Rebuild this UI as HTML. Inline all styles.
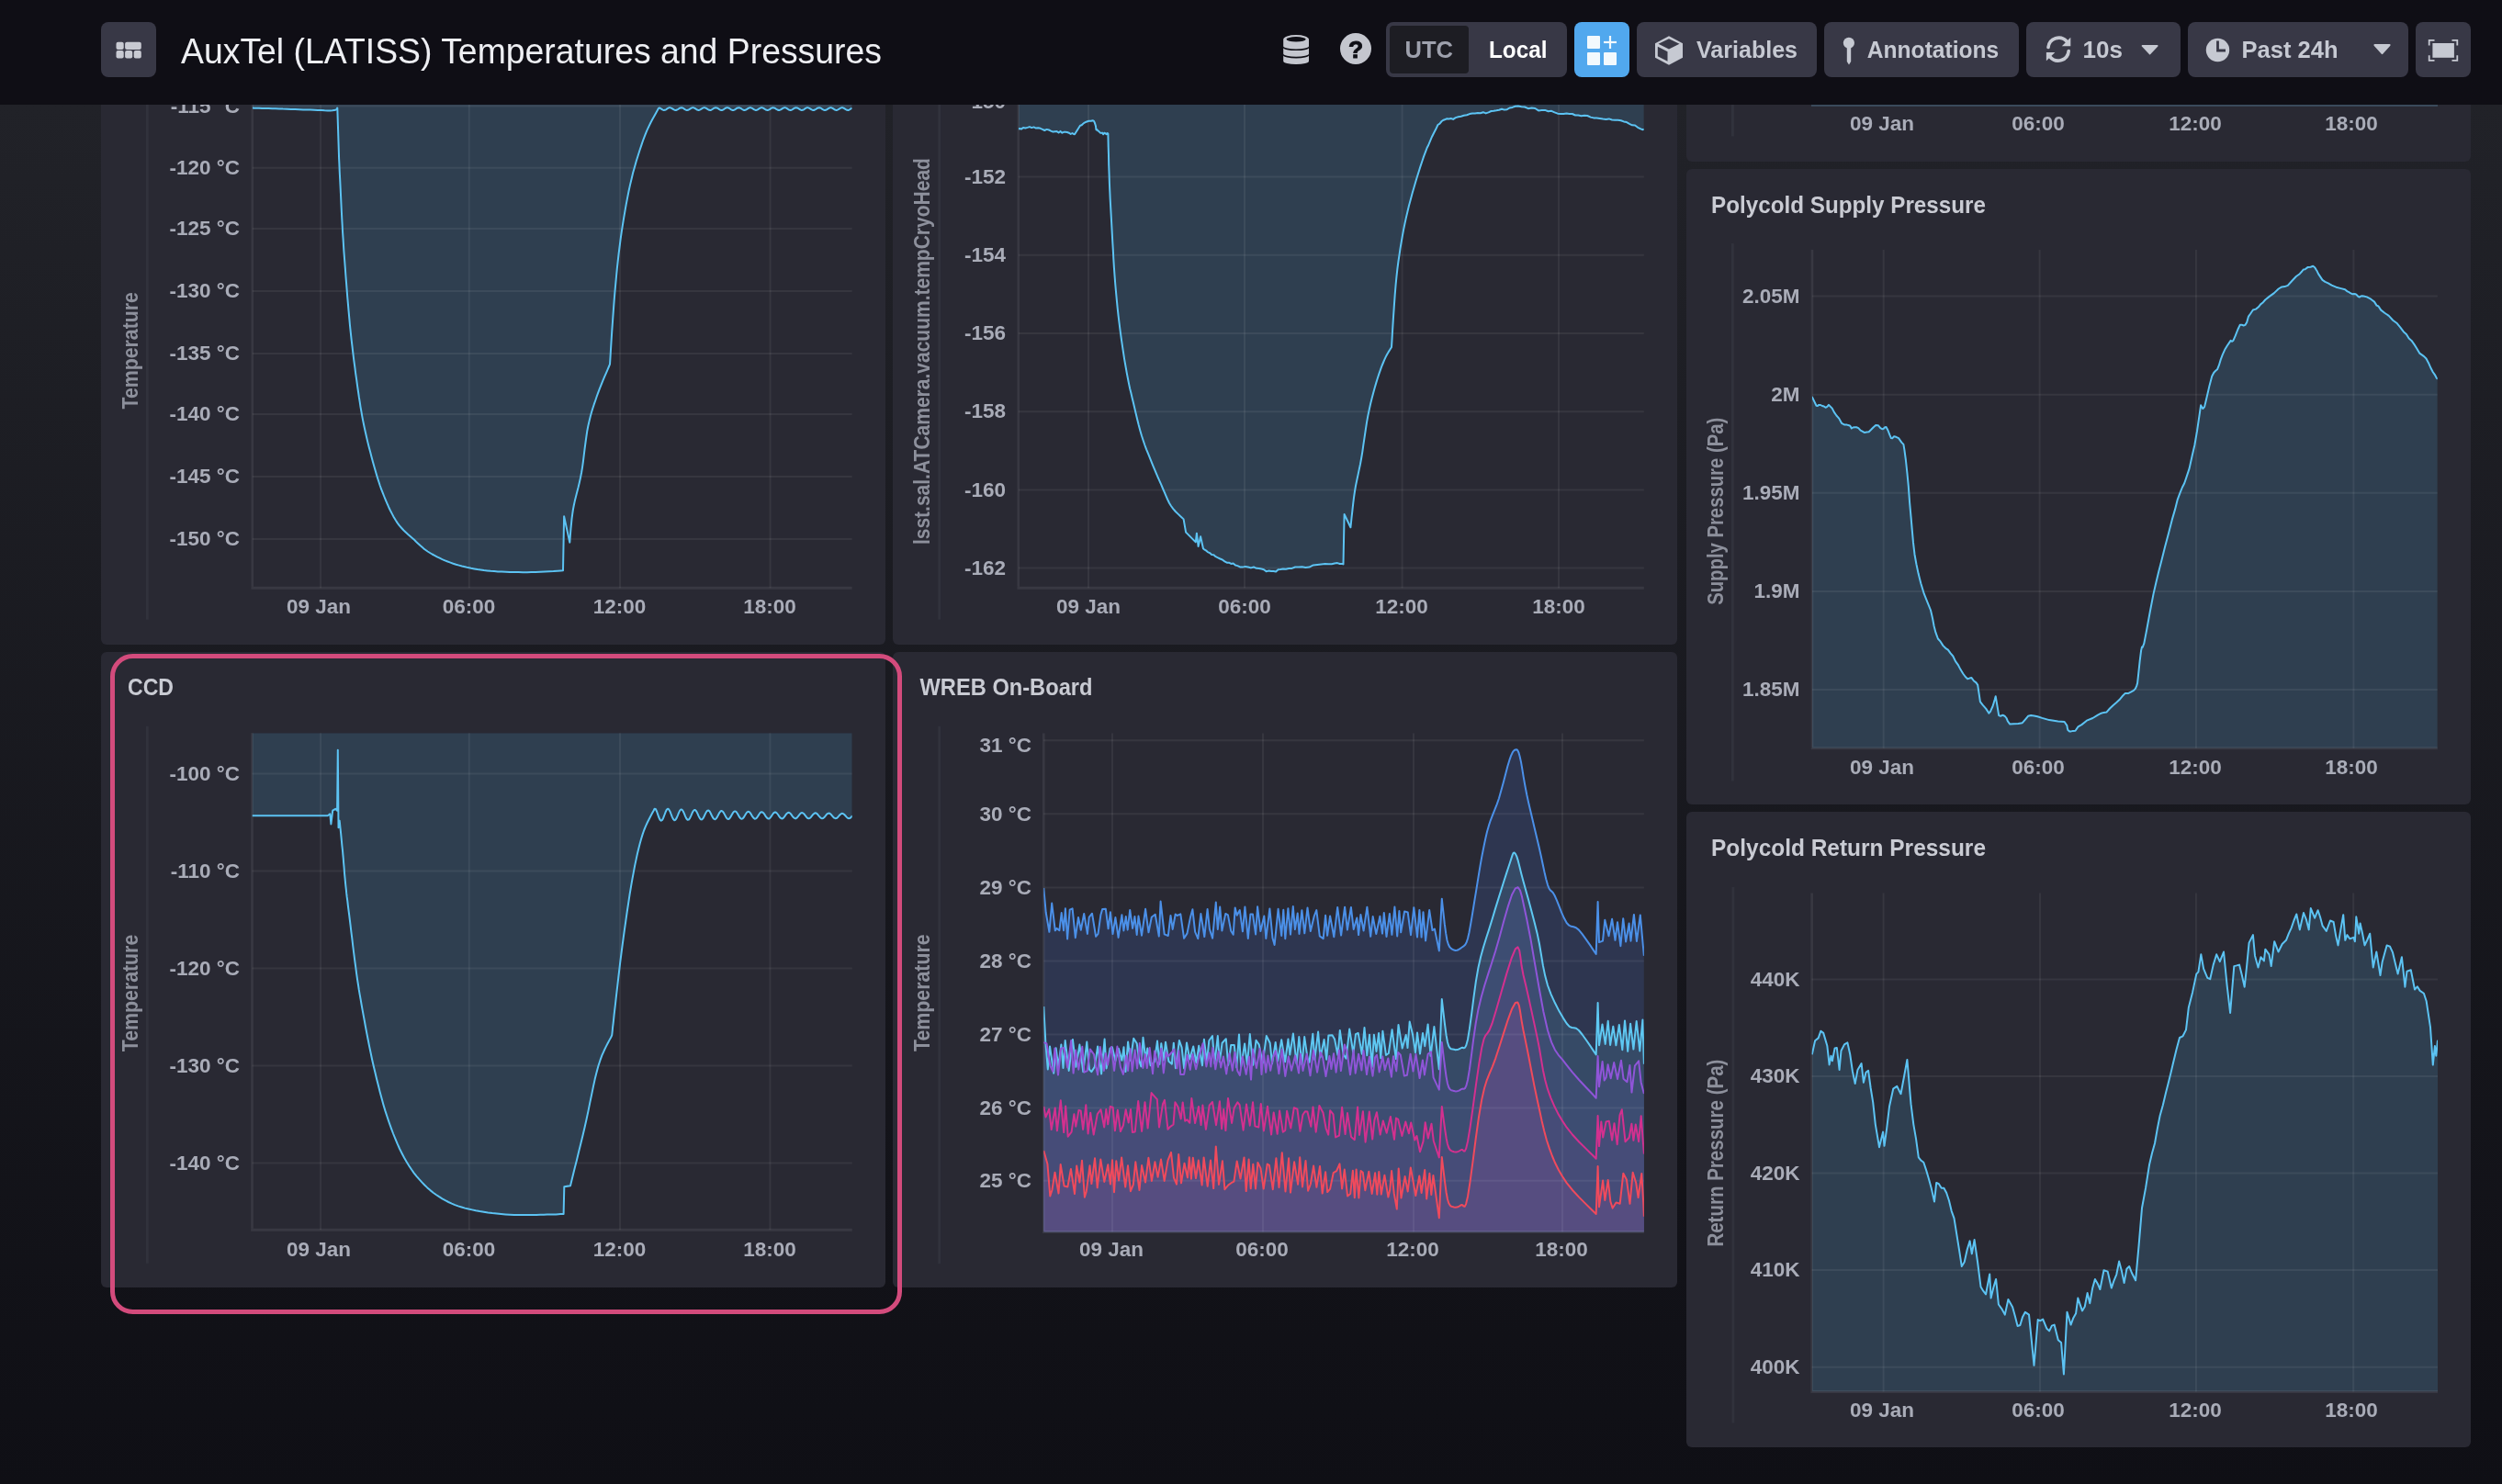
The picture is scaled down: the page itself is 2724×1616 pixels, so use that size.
<!DOCTYPE html>
<html><head><meta charset="utf-8"><title>AuxTel (LATISS) Temperatures and Pressures</title>
<style>
html,body{margin:0;padding:0;}
body{width:2724px;height:1616px;overflow:hidden;position:relative;background:#0f0f15;font-family:"Liberation Sans", sans-serif;}
#bg{position:absolute;left:0;top:0;width:2724px;height:1616px;background:linear-gradient(to bottom,#212228 114px,#0f0f15 1616px);}
.panel{position:absolute;background:#292933;border-radius:6px;overflow:hidden;}
.panel svg{position:absolute;left:0;top:0;display:block;will-change:transform;}
#hdr{position:absolute;left:0;top:0;width:2724px;height:114px;background:#0f0e15;z-index:5;}
#hdr svg{will-change:transform;}
.btn{position:absolute;top:24px;height:60px;background:#383846;border-radius:8px;}
text{font-family:"Liberation Sans", sans-serif;}
.tk{font-size:22.5px;font-weight:700;fill:#a9acb8;}
.al{font-size:23px;font-weight:700;fill:#8d909c;}
.ti{font-size:26.5px;font-weight:700;fill:#c9cbd3;}
.ht{font-size:39px;font-weight:400;fill:#eeeff3;}
.bt{font-size:26px;font-weight:700;fill:#c6c9d2;}
#hl{position:absolute;left:119.5px;top:712px;width:852.4px;height:709.3px;border:5px solid #d34b7c;border-radius:24.5px;z-index:3;}
</style></head>
<body>
<div id="bg"></div>
<div class="panel" style="left:110px;top:10px;width:854px;height:692px"><svg width="854" height="692" viewBox="110 10 854 692"><clipPath id="cp1"><rect x="274.8" y="98" width="652.8" height="542.3"/></clipPath><polygon points="274.8,98 274.8,117.6 276.7,117.7 279.1,117.7 282,117.8 285.3,117.9 288.8,118 292.5,118.1 296.3,118.2 300,118.3 303.9,118.4 308,118.6 312.4,118.7 316.8,118.9 321.3,119.1 325.7,119.2 330,119.4 334,119.5 337.9,119.6 342,119.8 345.9,120 349.8,120.1 353.4,120.3 356.7,120.4 359.6,120.4 362,120.3 363.8,120.1 365,119.8 365.9,119.4 366.4,118.9 366.7,118.5 366.9,118.1 367,117.7 367.3,117.5 369.1,172.8 369.4,178.5 369.7,186.3 370.2,195.6 370.7,205.8 371.2,216.4 371.7,227 372.2,236.9 372.7,245.6 373.1,253.2 373.6,260.4 374,267.1 374.4,273.6 374.9,280 375.4,286.5 375.9,293.2 376.4,300.2 377,307.6 377.6,315.2 378.2,323 378.9,330.9 379.6,338.8 380.3,346.7 381,354.5 381.8,362.1 382.6,369.7 383.5,377.2 384.4,384.8 385.3,392.3 386.3,399.7 387.2,406.9 388.2,413.7 389.1,420.3 390,426.5 390.8,432.2 391.7,437.7 392.5,443.1 393.4,448.2 394.3,453.4 395.3,458.6 396.4,464 397.6,469.5 398.9,475.2 400.2,480.9 401.6,486.5 403.1,492.1 404.5,497.5 405.9,502.8 407.3,507.7 408.6,512.3 409.9,516.8 411.2,521 412.5,525 413.8,529 415.2,532.8 416.7,536.7 418.2,540.5 419.8,544.4 421.5,548.3 423.2,552.2 425,556 426.9,559.6 428.8,563.2 430.8,566.5 432.8,569.6 434.9,572.4 437.2,575 439.5,577.5 441.9,579.7 444.3,581.9 446.6,583.9 448.9,585.9 451,587.8 452.9,589.7 454.7,591.4 456.4,593 458.1,594.6 459.8,596.1 461.5,597.6 463.5,599 465.6,600.5 468,602 470.5,603.5 473.1,604.9 475.8,606.3 478.6,607.7 481.5,609.1 484.4,610.3 487.4,611.5 490.4,612.6 493.4,613.7 496.5,614.7 499.7,615.6 502.9,616.5 506.2,617.3 509.5,618.1 512.9,618.8 516.3,619.4 519.8,620 523.2,620.5 526.8,621 530.4,621.4 534.1,621.8 538,622.1 542,622.4 546.2,622.6 550.6,622.8 555.2,623 559.9,623.1 564.6,623.1 569.3,623.2 573.9,623.2 578.4,623.1 583,623 588,622.8 593,622.5 598,622.2 602.6,622 606.8,621.7 610.3,621.5 613,621.3 614.1,562.3 620.3,590.7 620.5,588 620.8,584.4 621.1,580.1 621.5,575.4 622,570.3 622.5,565.1 623.2,559.9 623.9,555 624.8,550.3 625.8,545.6 627,540.8 628.2,536 629.5,531 630.7,525.9 631.9,520.6 633,515 634,509.1 634.9,502.7 635.7,496 636.5,489.3 637.4,482.5 638.3,476 639.2,469.8 640.3,464 641.5,458.7 642.7,453.7 644,449 645.4,444.5 646.8,440.2 648.3,436 649.7,431.8 651.2,427.6 652.8,423.3 654.6,418.8 656.4,414.3 658.3,409.9 660.1,405.8 661.7,402.1 663,399 664,396.7 664.4,390.6 664.9,382.3 665.5,372.5 666.2,361.6 667,350.3 667.8,338.9 668.6,328.1 669.4,318.4 670.2,309.6 671,301 671.8,292.6 672.7,284.4 673.6,276.4 674.6,268.5 675.6,260.7 676.7,252.9 677.9,245.2 679.1,237.6 680.4,230.1 681.7,222.7 683.1,215.4 684.5,208.3 686,201.4 687.6,194.7 689.2,188.1 691,181.7 692.8,175.3 694.7,169.2 696.6,163.3 698.5,157.6 700.3,152.3 702.2,147.3 704.1,142.6 706.2,138.1 708.3,133.8 710.4,129.8 712.4,126.2 714.2,123 715.7,120.3 716.8,118.2 718,117.4 719.2,118.1 720.4,118.9 721.6,119.6 722.8,120 724,119.8 725.2,119.3 726.4,118.4 727.6,117.7 728.8,117.2 730,117.3 731.2,117.8 732.4,118.6 733.6,119.4 734.8,119.9 736,120 737.2,119.5 738.4,118.8 739.6,118 740.8,117.4 742,117.2 743.2,117.5 744.4,118.2 745.6,119.1 746.8,119.7 748,120 749.2,119.8 750.4,119.1 751.6,118.3 752.8,117.6 754,117.2 755.2,117.3 756.4,117.9 757.6,118.7 758.8,119.5 760,119.9 761.2,119.9 762.4,119.4 763.6,118.7 764.8,117.8 766,117.3 767.2,117.2 768.4,117.6 769.6,118.4 770.8,119.2 772,119.8 773.2,120 774.4,119.7 775.6,119 776.8,118.2 778,117.5 779.2,117.2 780.4,117.4 781.6,118 782.8,118.9 784,119.6 785.2,120 786.4,119.9 787.6,119.3 788.8,118.5 790,117.7 791.2,117.3 792.4,117.3 793.6,117.7 794.8,118.5 796,119.3 797.2,119.9 798.4,120 799.6,119.6 800.8,118.9 802,118 803.2,117.4 804.4,117.2 805.6,117.5 806.8,118.2 808,119 809.2,119.7 810.4,120 811.6,119.8 812.8,119.2 814,118.4 815.2,117.6 816.4,117.2 817.6,117.3 818.8,117.8 820,118.7 821.2,119.4 822.4,119.9 823.6,119.9 824.8,119.5 826,118.7 827.2,117.9 828.4,117.3 829.6,117.2 830.8,117.6 832,118.3 833.2,119.1 834.4,119.8 835.6,120 836.8,119.7 838,119.1 839.2,118.2 840.4,117.5 841.6,117.2 842.8,117.4 844,118 845.2,118.8 846.4,119.5 847.6,120 848.8,119.9 850,119.4 851.2,118.6 852.4,117.8 853.6,117.3 854.8,117.2 856,117.7 857.2,118.4 858.4,119.3 859.6,119.8 860.8,120 862,119.6 863.2,118.9 864.4,118.1 865.6,117.4 866.8,117.2 868,117.4 869.2,118.1 870.4,118.9 871.6,119.6 872.8,120 874,119.8 875.2,119.3 876.4,118.4 877.6,117.7 878.8,117.2 880,117.3 881.2,117.8 882.4,118.6 883.6,119.4 884.8,119.9 886,120 887.2,119.5 888.4,118.8 889.6,118 890.8,117.4 892,117.2 893.2,117.5 894.4,118.2 895.6,119.1 896.8,119.7 898,120 899.2,119.8 900.4,119.1 901.6,118.3 902.8,117.6 904,117.2 905.2,117.3 906.4,117.9 907.6,118.7 908.8,119.5 910,119.9 911.2,119.9 912.4,119.4 913.6,118.7 914.8,117.8 916,117.3 917.2,117.2 918.4,117.6 919.6,118.4 920.8,119.2 922,119.8 923.2,120 924.4,119.7 925.6,119 926.8,118.2 927.6,117.5 927.6,98" fill="#2f3f50" clip-path="url(#cp1)"/><line x1="274.8" x2="927.6" y1="115.5" y2="115.5" stroke="rgba(255,255,255,0.062)" stroke-width="2"/><line x1="274.8" x2="927.6" y1="182.8" y2="182.8" stroke="rgba(255,255,255,0.062)" stroke-width="2"/><line x1="274.8" x2="927.6" y1="248.9" y2="248.9" stroke="rgba(255,255,255,0.062)" stroke-width="2"/><line x1="274.8" x2="927.6" y1="316.9" y2="316.9" stroke="rgba(255,255,255,0.062)" stroke-width="2"/><line x1="274.8" x2="927.6" y1="384.9" y2="384.9" stroke="rgba(255,255,255,0.062)" stroke-width="2"/><line x1="274.8" x2="927.6" y1="450.9" y2="450.9" stroke="rgba(255,255,255,0.062)" stroke-width="2"/><line x1="274.8" x2="927.6" y1="518.9" y2="518.9" stroke="rgba(255,255,255,0.062)" stroke-width="2"/><line x1="274.8" x2="927.6" y1="586.9" y2="586.9" stroke="rgba(255,255,255,0.062)" stroke-width="2"/><line x1="349.1" x2="349.1" y1="98" y2="640.3" stroke="rgba(255,255,255,0.062)" stroke-width="2"/><line x1="510.8" x2="510.8" y1="98" y2="640.3" stroke="rgba(255,255,255,0.062)" stroke-width="2"/><line x1="675" x2="675" y1="98" y2="640.3" stroke="rgba(255,255,255,0.062)" stroke-width="2"/><line x1="838.6" x2="838.6" y1="98" y2="640.3" stroke="rgba(255,255,255,0.062)" stroke-width="2"/><line x1="160.4" x2="160.4" y1="90" y2="674.8" stroke="#31323c" stroke-width="2.8"/><line x1="274.8" x2="274.8" y1="98" y2="638.8" stroke="rgba(255,255,255,0.075)" stroke-width="2.6"/><line x1="273.5" x2="927.6" y1="640.3" y2="640.3" stroke="rgba(255,255,255,0.075)" stroke-width="3"/><polyline points="274.8,117.6 276.7,117.7 279.1,117.7 282,117.8 285.3,117.9 288.8,118 292.5,118.1 296.3,118.2 300,118.3 303.9,118.4 308,118.6 312.4,118.7 316.8,118.9 321.3,119.1 325.7,119.2 330,119.4 334,119.5 337.9,119.6 342,119.8 345.9,120 349.8,120.1 353.4,120.3 356.7,120.4 359.6,120.4 362,120.3 363.8,120.1 365,119.8 365.9,119.4 366.4,118.9 366.7,118.5 366.9,118.1 367,117.7 367.3,117.5 369.1,172.8 369.4,178.5 369.7,186.3 370.2,195.6 370.7,205.8 371.2,216.4 371.7,227 372.2,236.9 372.7,245.6 373.1,253.2 373.6,260.4 374,267.1 374.4,273.6 374.9,280 375.4,286.5 375.9,293.2 376.4,300.2 377,307.6 377.6,315.2 378.2,323 378.9,330.9 379.6,338.8 380.3,346.7 381,354.5 381.8,362.1 382.6,369.7 383.5,377.2 384.4,384.8 385.3,392.3 386.3,399.7 387.2,406.9 388.2,413.7 389.1,420.3 390,426.5 390.8,432.2 391.7,437.7 392.5,443.1 393.4,448.2 394.3,453.4 395.3,458.6 396.4,464 397.6,469.5 398.9,475.2 400.2,480.9 401.6,486.5 403.1,492.1 404.5,497.5 405.9,502.8 407.3,507.7 408.6,512.3 409.9,516.8 411.2,521 412.5,525 413.8,529 415.2,532.8 416.7,536.7 418.2,540.5 419.8,544.4 421.5,548.3 423.2,552.2 425,556 426.9,559.6 428.8,563.2 430.8,566.5 432.8,569.6 434.9,572.4 437.2,575 439.5,577.5 441.9,579.7 444.3,581.9 446.6,583.9 448.9,585.9 451,587.8 452.9,589.7 454.7,591.4 456.4,593 458.1,594.6 459.8,596.1 461.5,597.6 463.5,599 465.6,600.5 468,602 470.5,603.5 473.1,604.9 475.8,606.3 478.6,607.7 481.5,609.1 484.4,610.3 487.4,611.5 490.4,612.6 493.4,613.7 496.5,614.7 499.7,615.6 502.9,616.5 506.2,617.3 509.5,618.1 512.9,618.8 516.3,619.4 519.8,620 523.2,620.5 526.8,621 530.4,621.4 534.1,621.8 538,622.1 542,622.4 546.2,622.6 550.6,622.8 555.2,623 559.9,623.1 564.6,623.1 569.3,623.2 573.9,623.2 578.4,623.1 583,623 588,622.8 593,622.5 598,622.2 602.6,622 606.8,621.7 610.3,621.5 613,621.3 614.1,562.3 620.3,590.7 620.5,588 620.8,584.4 621.1,580.1 621.5,575.4 622,570.3 622.5,565.1 623.2,559.9 623.9,555 624.8,550.3 625.8,545.6 627,540.8 628.2,536 629.5,531 630.7,525.9 631.9,520.6 633,515 634,509.1 634.9,502.7 635.7,496 636.5,489.3 637.4,482.5 638.3,476 639.2,469.8 640.3,464 641.5,458.7 642.7,453.7 644,449 645.4,444.5 646.8,440.2 648.3,436 649.7,431.8 651.2,427.6 652.8,423.3 654.6,418.8 656.4,414.3 658.3,409.9 660.1,405.8 661.7,402.1 663,399 664,396.7 664.4,390.6 664.9,382.3 665.5,372.5 666.2,361.6 667,350.3 667.8,338.9 668.6,328.1 669.4,318.4 670.2,309.6 671,301 671.8,292.6 672.7,284.4 673.6,276.4 674.6,268.5 675.6,260.7 676.7,252.9 677.9,245.2 679.1,237.6 680.4,230.1 681.7,222.7 683.1,215.4 684.5,208.3 686,201.4 687.6,194.7 689.2,188.1 691,181.7 692.8,175.3 694.7,169.2 696.6,163.3 698.5,157.6 700.3,152.3 702.2,147.3 704.1,142.6 706.2,138.1 708.3,133.8 710.4,129.8 712.4,126.2 714.2,123 715.7,120.3 716.8,118.2 718,117.4 719.2,118.1 720.4,118.9 721.6,119.6 722.8,120 724,119.8 725.2,119.3 726.4,118.4 727.6,117.7 728.8,117.2 730,117.3 731.2,117.8 732.4,118.6 733.6,119.4 734.8,119.9 736,120 737.2,119.5 738.4,118.8 739.6,118 740.8,117.4 742,117.2 743.2,117.5 744.4,118.2 745.6,119.1 746.8,119.7 748,120 749.2,119.8 750.4,119.1 751.6,118.3 752.8,117.6 754,117.2 755.2,117.3 756.4,117.9 757.6,118.7 758.8,119.5 760,119.9 761.2,119.9 762.4,119.4 763.6,118.7 764.8,117.8 766,117.3 767.2,117.2 768.4,117.6 769.6,118.4 770.8,119.2 772,119.8 773.2,120 774.4,119.7 775.6,119 776.8,118.2 778,117.5 779.2,117.2 780.4,117.4 781.6,118 782.8,118.9 784,119.6 785.2,120 786.4,119.9 787.6,119.3 788.8,118.5 790,117.7 791.2,117.3 792.4,117.3 793.6,117.7 794.8,118.5 796,119.3 797.2,119.9 798.4,120 799.6,119.6 800.8,118.9 802,118 803.2,117.4 804.4,117.2 805.6,117.5 806.8,118.2 808,119 809.2,119.7 810.4,120 811.6,119.8 812.8,119.2 814,118.4 815.2,117.6 816.4,117.2 817.6,117.3 818.8,117.8 820,118.7 821.2,119.4 822.4,119.9 823.6,119.9 824.8,119.5 826,118.7 827.2,117.9 828.4,117.3 829.6,117.2 830.8,117.6 832,118.3 833.2,119.1 834.4,119.8 835.6,120 836.8,119.7 838,119.1 839.2,118.2 840.4,117.5 841.6,117.2 842.8,117.4 844,118 845.2,118.8 846.4,119.5 847.6,120 848.8,119.9 850,119.4 851.2,118.6 852.4,117.8 853.6,117.3 854.8,117.2 856,117.7 857.2,118.4 858.4,119.3 859.6,119.8 860.8,120 862,119.6 863.2,118.9 864.4,118.1 865.6,117.4 866.8,117.2 868,117.4 869.2,118.1 870.4,118.9 871.6,119.6 872.8,120 874,119.8 875.2,119.3 876.4,118.4 877.6,117.7 878.8,117.2 880,117.3 881.2,117.8 882.4,118.6 883.6,119.4 884.8,119.9 886,120 887.2,119.5 888.4,118.8 889.6,118 890.8,117.4 892,117.2 893.2,117.5 894.4,118.2 895.6,119.1 896.8,119.7 898,120 899.2,119.8 900.4,119.1 901.6,118.3 902.8,117.6 904,117.2 905.2,117.3 906.4,117.9 907.6,118.7 908.8,119.5 910,119.9 911.2,119.9 912.4,119.4 913.6,118.7 914.8,117.8 916,117.3 917.2,117.2 918.4,117.6 919.6,118.4 920.8,119.2 922,119.8 923.2,120 924.4,119.7 925.6,119 926.8,118.2 927.6,117.5" fill="none" stroke="#5cc3f3" stroke-width="2.0" stroke-linejoin="round" clip-path="url(#cp1)"/><text x="261" y="122.7" text-anchor="end" class="tk">-115 °C</text><text x="261" y="190" text-anchor="end" class="tk">-120 °C</text><text x="261" y="256.1" text-anchor="end" class="tk">-125 °C</text><text x="261" y="324.1" text-anchor="end" class="tk">-130 °C</text><text x="261" y="392.1" text-anchor="end" class="tk">-135 °C</text><text x="261" y="458.1" text-anchor="end" class="tk">-140 °C</text><text x="261" y="526.1" text-anchor="end" class="tk">-145 °C</text><text x="261" y="594.1" text-anchor="end" class="tk">-150 °C</text><text x="347" y="668" text-anchor="middle" class="tk">09 Jan</text><text x="510.5" y="668" text-anchor="middle" class="tk">06:00</text><text x="674.5" y="668" text-anchor="middle" class="tk">12:00</text><text x="838" y="668" text-anchor="middle" class="tk">18:00</text><text x="150" y="381.8" transform="rotate(-90 150 381.8)" text-anchor="middle" class="al" textLength="127.5" lengthAdjust="spacingAndGlyphs">Temperature</text></svg></div><div class="panel" style="left:972px;top:10px;width:854px;height:692px"><svg width="854" height="692" viewBox="972 10 854 692"><clipPath id="cp2"><rect x="1108.8" y="98" width="681.0" height="542.3"/></clipPath><polygon points="1108.8,98 1108.8,140.6 1110.1,140 1111.9,140.6 1114,139 1116.3,139.5 1118.7,138.9 1121,138.1 1123.2,139.1 1125.5,138.4 1127.9,139.6 1130.3,139.3 1132.7,139.8 1135,140.8 1137.3,142 1139.6,140.9 1142,141.5 1144.2,142.6 1146.5,143.6 1148.6,143.2 1150.6,143.1 1152.6,144.5 1154.5,142.9 1156.4,144.7 1158.2,143.8 1160,143.8 1161.9,144 1163.8,144.7 1165.7,146 1167.5,145 1168.9,146 1170,146.3 1176,136.7 1177.6,136.3 1179.9,134.1 1182.6,132.7 1185.4,131.7 1187.8,131.8 1189.7,131.2 1191,131.8 1191.9,133.9 1192.5,135.7 1193,137.5 1193.3,140.4 1193.6,141.4 1194.3,141 1195.3,142.3 1196.4,143 1197.6,144.5 1198.9,144.9 1200,144.6 1201.1,146.3 1202.4,144.7 1203.6,145.4 1204.7,146.2 1205.7,145 1206.4,145.7 1206.5,150.6 1206.7,159.9 1207,169.2 1207.2,179.4 1207.6,189.7 1207.9,199.3 1208.3,208.2 1208.7,217 1209.2,225.9 1209.7,234.8 1210.2,243.8 1210.7,252.9 1211.2,262.3 1211.8,271.9 1212.3,281.7 1212.9,291.4 1213.6,300.9 1214.3,310 1215.1,318.8 1215.9,327.3 1216.7,335.7 1217.6,343.9 1218.6,352 1219.6,360 1220.7,368.1 1221.9,376.3 1223.1,384.3 1224.3,392.1 1225.6,399.5 1226.8,406.4 1228,412.5 1229.1,418.1 1230.2,423.2 1231.4,428.1 1232.6,433.2 1233.9,438.6 1235.3,444.4 1236.7,450.5 1238.2,456.7 1239.7,462.8 1241.3,468.7 1242.9,474.3 1244.6,479.5 1246.3,484.5 1248.1,489.3 1250,493.9 1251.8,498.4 1253.6,502.9 1255.4,507.3 1257.2,511.6 1258.9,515.7 1260.7,519.8 1262.5,523.9 1264.3,527.9 1266,532 1267.8,536.1 1269.5,540.1 1271.2,544 1273,547.7 1275,551 1277.3,554.1 1279.8,557 1282.5,559.6 1285,562 1287.1,563.9 1288.6,565.4 1291.1,579.6 1301.8,590.4 1302.9,580.7 1304.6,595 1307.1,584.3 1310,597.5 1311.2,598.3 1312.8,599.3 1314.8,601.1 1317,602.1 1319.2,604.1 1321.4,604.2 1323.6,606.2 1326,607.3 1328.4,608.5 1330.8,609.5 1333.3,611.4 1335.7,612.7 1338,612.7 1340.3,613.9 1342.6,613.5 1345,615.5 1347.4,616.1 1350,617.4 1352.8,617.6 1355.8,616.9 1358.8,617.5 1361.9,618.4 1365,617.5 1367.9,618.8 1370.7,618.9 1373.4,619.5 1376,620.2 1378.6,622.3 1381.2,621.6 1383.9,622 1386.5,622.1 1389.1,622.5 1391.6,620.2 1394.2,620.1 1397,619.6 1400,619.7 1403.2,619.1 1406.6,618.9 1410.1,617.5 1413.8,617.5 1417.6,617.2 1421.4,617.9 1425.5,617.6 1429.8,615.4 1434.2,614.9 1438.6,614.5 1442.7,614.1 1446.4,614.3 1449.8,614.3 1453,613.6 1456,613.1 1458.7,614 1460.9,614 1462.5,614.4 1463.6,560 1470.4,574.3 1470.9,570 1471.5,564 1472.3,556.9 1473.1,549.3 1474,541.8 1475,535 1476,529 1477.2,523.2 1478.4,517.6 1479.6,511.9 1480.9,505.8 1482.1,499.3 1483.3,492.1 1484.4,484.2 1485.6,476.1 1486.8,468 1488,460.1 1489.3,452.9 1490.7,446.2 1492.1,439.8 1493.6,433.7 1495.2,427.8 1496.7,422.3 1498.2,417.1 1499.7,412.2 1501.2,407.6 1502.7,403.3 1504.2,399.2 1505.7,395.5 1507.1,392.1 1508.6,388.9 1510.1,386 1511.6,383.4 1513,381.2 1514.2,379.3 1515,377.9 1515.5,370.3 1516.1,359.5 1516.9,346.8 1517.8,333.6 1518.7,320.9 1519.6,310 1520.5,300.9 1521.4,292.7 1522.4,285 1523.5,277.7 1524.5,270.7 1525.7,263.6 1526.9,256.7 1528.1,250.1 1529.4,243.7 1530.8,237.4 1532.3,231 1533.9,224.3 1535.8,217.2 1537.8,209.7 1540,202.2 1542.2,194.8 1544.4,187.8 1546.4,181.4 1548.3,175.7 1550,170.6 1551.8,165.8 1553.5,161.3 1555.2,158 1557.1,153.3 1559.1,148.7 1561.1,144.7 1563.2,140.8 1565.4,136 1567.5,134.6 1569.6,132 1571.6,130.7 1573.6,130 1575.5,129.2 1577.5,129.5 1579.7,129 1582.1,129.9 1584.8,128.1 1587.7,127.3 1590.7,126.7 1593.8,125.8 1597,125.3 1600,124.1 1603,123.5 1605.9,123.4 1608.9,123 1611.8,123.2 1614.8,122.2 1617.7,123.4 1620.6,122.4 1623.5,121 1626.3,120.7 1629.2,120.3 1632.1,119.8 1635,118.7 1637.9,119.6 1640.8,119.2 1643.6,117.5 1646.6,116.9 1649.7,115.7 1652.9,115.6 1656.4,116.2 1660,116.5 1663.8,118.2 1667.6,117.6 1671.3,118 1675,120.4 1678.6,120.1 1682.1,119.9 1685.6,121.2 1689.1,120.8 1692.5,122.3 1695.9,123.7 1699.2,123.9 1702.4,123.9 1705.5,123.4 1708.6,124 1711.8,124 1715,125.5 1718.3,125.5 1721.6,126.3 1724.9,125.8 1728.3,126 1731.7,127.6 1735,128.4 1738.3,128.6 1741.7,129 1745.1,129.5 1748.4,129.9 1751.7,129.4 1755,130.5 1758.3,130.8 1761.5,130.7 1764.8,131.3 1767.9,132.4 1771,133.1 1774,134.8 1777,136.3 1780.1,136.5 1783.1,138.8 1785.8,140.2 1788.1,141.2 1789.8,140.7 1789.8,98" fill="#2f3f50" clip-path="url(#cp2)"/><line x1="1108.8" x2="1789.8" y1="107.4" y2="107.4" stroke="rgba(255,255,255,0.062)" stroke-width="2"/><line x1="1108.8" x2="1789.8" y1="192.6" y2="192.6" stroke="rgba(255,255,255,0.062)" stroke-width="2"/><line x1="1108.8" x2="1789.8" y1="277.8" y2="277.8" stroke="rgba(255,255,255,0.062)" stroke-width="2"/><line x1="1108.8" x2="1789.8" y1="363" y2="363" stroke="rgba(255,255,255,0.062)" stroke-width="2"/><line x1="1108.8" x2="1789.8" y1="448.2" y2="448.2" stroke="rgba(255,255,255,0.062)" stroke-width="2"/><line x1="1108.8" x2="1789.8" y1="533.4" y2="533.4" stroke="rgba(255,255,255,0.062)" stroke-width="2"/><line x1="1108.8" x2="1789.8" y1="618.6" y2="618.6" stroke="rgba(255,255,255,0.062)" stroke-width="2"/><line x1="1185" x2="1185" y1="98" y2="640.3" stroke="rgba(255,255,255,0.062)" stroke-width="2"/><line x1="1355" x2="1355" y1="98" y2="640.3" stroke="rgba(255,255,255,0.062)" stroke-width="2"/><line x1="1526.6" x2="1526.6" y1="98" y2="640.3" stroke="rgba(255,255,255,0.062)" stroke-width="2"/><line x1="1697" x2="1697" y1="98" y2="640.3" stroke="rgba(255,255,255,0.062)" stroke-width="2"/><line x1="1022.7" x2="1022.7" y1="90" y2="674.8" stroke="#31323c" stroke-width="2.8"/><line x1="1108.8" x2="1108.8" y1="98" y2="638.8" stroke="rgba(255,255,255,0.075)" stroke-width="2.6"/><line x1="1107.5" x2="1789.8" y1="640.3" y2="640.3" stroke="rgba(255,255,255,0.075)" stroke-width="3"/><polyline points="1108.8,140.6 1110.1,140 1111.9,140.6 1114,139 1116.3,139.5 1118.7,138.9 1121,138.1 1123.2,139.1 1125.5,138.4 1127.9,139.6 1130.3,139.3 1132.7,139.8 1135,140.8 1137.3,142 1139.6,140.9 1142,141.5 1144.2,142.6 1146.5,143.6 1148.6,143.2 1150.6,143.1 1152.6,144.5 1154.5,142.9 1156.4,144.7 1158.2,143.8 1160,143.8 1161.9,144 1163.8,144.7 1165.7,146 1167.5,145 1168.9,146 1170,146.3 1176,136.7 1177.6,136.3 1179.9,134.1 1182.6,132.7 1185.4,131.7 1187.8,131.8 1189.7,131.2 1191,131.8 1191.9,133.9 1192.5,135.7 1193,137.5 1193.3,140.4 1193.6,141.4 1194.3,141 1195.3,142.3 1196.4,143 1197.6,144.5 1198.9,144.9 1200,144.6 1201.1,146.3 1202.4,144.7 1203.6,145.4 1204.7,146.2 1205.7,145 1206.4,145.7 1206.5,150.6 1206.7,159.9 1207,169.2 1207.2,179.4 1207.6,189.7 1207.9,199.3 1208.3,208.2 1208.7,217 1209.2,225.9 1209.7,234.8 1210.2,243.8 1210.7,252.9 1211.2,262.3 1211.8,271.9 1212.3,281.7 1212.9,291.4 1213.6,300.9 1214.3,310 1215.1,318.8 1215.9,327.3 1216.7,335.7 1217.6,343.9 1218.6,352 1219.6,360 1220.7,368.1 1221.9,376.3 1223.1,384.3 1224.3,392.1 1225.6,399.5 1226.8,406.4 1228,412.5 1229.1,418.1 1230.2,423.2 1231.4,428.1 1232.6,433.2 1233.9,438.6 1235.3,444.4 1236.7,450.5 1238.2,456.7 1239.7,462.8 1241.3,468.7 1242.9,474.3 1244.6,479.5 1246.3,484.5 1248.1,489.3 1250,493.9 1251.8,498.4 1253.6,502.9 1255.4,507.3 1257.2,511.6 1258.9,515.7 1260.7,519.8 1262.5,523.9 1264.3,527.9 1266,532 1267.8,536.1 1269.5,540.1 1271.2,544 1273,547.7 1275,551 1277.3,554.1 1279.8,557 1282.5,559.6 1285,562 1287.1,563.9 1288.6,565.4 1291.1,579.6 1301.8,590.4 1302.9,580.7 1304.6,595 1307.1,584.3 1310,597.5 1311.2,598.3 1312.8,599.3 1314.8,601.1 1317,602.1 1319.2,604.1 1321.4,604.2 1323.6,606.2 1326,607.3 1328.4,608.5 1330.8,609.5 1333.3,611.4 1335.7,612.7 1338,612.7 1340.3,613.9 1342.6,613.5 1345,615.5 1347.4,616.1 1350,617.4 1352.8,617.6 1355.8,616.9 1358.8,617.5 1361.9,618.4 1365,617.5 1367.9,618.8 1370.7,618.9 1373.4,619.5 1376,620.2 1378.6,622.3 1381.2,621.6 1383.9,622 1386.5,622.1 1389.1,622.5 1391.6,620.2 1394.2,620.1 1397,619.6 1400,619.7 1403.2,619.1 1406.6,618.9 1410.1,617.5 1413.8,617.5 1417.6,617.2 1421.4,617.9 1425.5,617.6 1429.8,615.4 1434.2,614.9 1438.6,614.5 1442.7,614.1 1446.4,614.3 1449.8,614.3 1453,613.6 1456,613.1 1458.7,614 1460.9,614 1462.5,614.4 1463.6,560 1470.4,574.3 1470.9,570 1471.5,564 1472.3,556.9 1473.1,549.3 1474,541.8 1475,535 1476,529 1477.2,523.2 1478.4,517.6 1479.6,511.9 1480.9,505.8 1482.1,499.3 1483.3,492.1 1484.4,484.2 1485.6,476.1 1486.8,468 1488,460.1 1489.3,452.9 1490.7,446.2 1492.1,439.8 1493.6,433.7 1495.2,427.8 1496.7,422.3 1498.2,417.1 1499.7,412.2 1501.2,407.6 1502.7,403.3 1504.2,399.2 1505.7,395.5 1507.1,392.1 1508.6,388.9 1510.1,386 1511.6,383.4 1513,381.2 1514.2,379.3 1515,377.9 1515.5,370.3 1516.1,359.5 1516.9,346.8 1517.8,333.6 1518.7,320.9 1519.6,310 1520.5,300.9 1521.4,292.7 1522.4,285 1523.5,277.7 1524.5,270.7 1525.7,263.6 1526.9,256.7 1528.1,250.1 1529.4,243.7 1530.8,237.4 1532.3,231 1533.9,224.3 1535.8,217.2 1537.8,209.7 1540,202.2 1542.2,194.8 1544.4,187.8 1546.4,181.4 1548.3,175.7 1550,170.6 1551.8,165.8 1553.5,161.3 1555.2,158 1557.1,153.3 1559.1,148.7 1561.1,144.7 1563.2,140.8 1565.4,136 1567.5,134.6 1569.6,132 1571.6,130.7 1573.6,130 1575.5,129.2 1577.5,129.5 1579.7,129 1582.1,129.9 1584.8,128.1 1587.7,127.3 1590.7,126.7 1593.8,125.8 1597,125.3 1600,124.1 1603,123.5 1605.9,123.4 1608.9,123 1611.8,123.2 1614.8,122.2 1617.7,123.4 1620.6,122.4 1623.5,121 1626.3,120.7 1629.2,120.3 1632.1,119.8 1635,118.7 1637.9,119.6 1640.8,119.2 1643.6,117.5 1646.6,116.9 1649.7,115.7 1652.9,115.6 1656.4,116.2 1660,116.5 1663.8,118.2 1667.6,117.6 1671.3,118 1675,120.4 1678.6,120.1 1682.1,119.9 1685.6,121.2 1689.1,120.8 1692.5,122.3 1695.9,123.7 1699.2,123.9 1702.4,123.9 1705.5,123.4 1708.6,124 1711.8,124 1715,125.5 1718.3,125.5 1721.6,126.3 1724.9,125.8 1728.3,126 1731.7,127.6 1735,128.4 1738.3,128.6 1741.7,129 1745.1,129.5 1748.4,129.9 1751.7,129.4 1755,130.5 1758.3,130.8 1761.5,130.7 1764.8,131.3 1767.9,132.4 1771,133.1 1774,134.8 1777,136.3 1780.1,136.5 1783.1,138.8 1785.8,140.2 1788.1,141.2 1789.8,140.7" fill="none" stroke="#5cc3f3" stroke-width="2.0" stroke-linejoin="round" clip-path="url(#cp2)"/><text x="1095" y="118.2" text-anchor="end" class="tk">-150</text><text x="1095" y="199.8" text-anchor="end" class="tk">-152</text><text x="1095" y="285" text-anchor="end" class="tk">-154</text><text x="1095" y="370.2" text-anchor="end" class="tk">-156</text><text x="1095" y="455.4" text-anchor="end" class="tk">-158</text><text x="1095" y="540.6" text-anchor="end" class="tk">-160</text><text x="1095" y="625.8" text-anchor="end" class="tk">-162</text><text x="1185" y="668" text-anchor="middle" class="tk">09 Jan</text><text x="1355" y="668" text-anchor="middle" class="tk">06:00</text><text x="1526" y="668" text-anchor="middle" class="tk">12:00</text><text x="1697" y="668" text-anchor="middle" class="tk">18:00</text><text x="1012" y="382.6" transform="rotate(-90 1012 382.6)" text-anchor="middle" class="al" textLength="421" lengthAdjust="spacingAndGlyphs">lsst.sal.ATCamera.vacuum.tempCryoHead</text></svg></div><div class="panel" style="left:1836px;top:-516px;width:854px;height:692px"><svg width="854" height="692" viewBox="1836 -516 854 692"><line x1="1972" x2="2654" y1="114.5" y2="114.5" stroke="#3a4a5b" stroke-width="3"/><line x1="1886.4" x2="1886.4" y1="100" y2="148.5" stroke="#31323c" stroke-width="2.8"/><text x="2049" y="141.5" text-anchor="middle" class="tk">09 Jan</text><text x="2219" y="141.5" text-anchor="middle" class="tk">06:00</text><text x="2390" y="141.5" text-anchor="middle" class="tk">12:00</text><text x="2560" y="141.5" text-anchor="middle" class="tk">18:00</text></svg></div><div class="panel" style="left:1836px;top:184px;width:854px;height:692px"><svg width="854" height="692" viewBox="1836 184 854 692"><clipPath id="cp4"><rect x="1973" y="272" width="680.8000000000002" height="542.7"/></clipPath><polygon points="1972.7,814.7 1972.7,432 1977.5,441.7 1978.7,442.1 1980.3,440.9 1982.1,441 1983.9,442 1985.8,442.5 1987.5,443.7 1988.7,443.3 1989.7,442.4 1991,440.9 1992.7,442.6 1994.7,444.6 1996.9,448.9 1999.4,452.5 2002.2,455.6 2005,460.8 2007.9,462.4 2010.8,462.6 2013.1,463.3 2014.3,463.7 2014.9,464.7 2015.8,466.5 2017.4,465.5 2019.2,465.2 2021.2,465.3 2023.3,466.1 2025.6,468.6 2027.9,469.8 2030.1,471.1 2032.4,470.6 2034.7,470.2 2037.2,467.8 2039.7,465.2 2042.2,463 2044.8,463.2 2047.3,466.1 2049.5,467.3 2051,466.5 2052.2,465.2 2053.5,465 2055.4,468.5 2057.4,473.7 2058.9,477.1 2060.2,477.3 2062.1,475.2 2064.3,475.8 2067.1,477.2 2070.2,481.6 2072.4,483.9 2073.4,489.8 2074.9,501 2076.4,515 2077.8,529.4 2079.1,547.4 2080.5,562.6 2081.7,576.4 2083,590.9 2084.5,603.7 2086.4,614.3 2088.6,624.6 2091.3,635.3 2094.8,646.7 2098.7,656.3 2102,664.5 2104.1,673.6 2105.6,681.7 2107.4,688.7 2109.9,695.5 2112.7,698.7 2115.5,703.1 2118.2,705.8 2120.9,707.6 2123.6,711.4 2126.3,714.5 2129,720.1 2131.7,723.8 2134.5,729.1 2137.2,733.5 2139.8,737 2142.1,739.2 2144.3,738.6 2146.5,738.1 2149,741.5 2151.5,743.4 2153.2,745.9 2155.9,764.2 2158.6,767.7 2162.3,771.9 2165.4,776.6 2167.2,774.5 2168.3,771.7 2169.4,769.5 2170.7,765.2 2171.9,761.3 2172.7,758.2 2176.2,779.1 2178,779.7 2180.5,778.7 2182.9,780 2184.5,782 2185.9,785.4 2188.3,788.6 2192.4,788.3 2197.3,787.9 2201.8,787.2 2205.1,783.3 2208,779.8 2211.2,779.1 2214.6,779.4 2218.3,780.2 2223.3,781.9 2231.2,784.1 2240.6,785.6 2247.6,786 2250.4,790.1 2250.9,793.3 2251.6,795.3 2253.1,796.4 2254.9,796.4 2257,795.9 2259.5,795.7 2262.5,791.4 2266.4,789.1 2271.9,784.7 2278.4,782 2283.9,778.6 2287.6,776.7 2290.4,775.9 2293.4,775.6 2297,771.5 2300.7,768 2304.2,765 2307.4,762.1 2310.5,758.3 2313.6,755.1 2316.9,755.1 2320.3,753.3 2323,751.9 2324.9,749.8 2326.2,746.9 2327.1,743.9 2328.2,733.6 2329.7,719.5 2331.1,708.4 2332,704.5 2332.7,704.8 2334.3,700.7 2337.2,685.7 2341,665 2344.5,646.9 2347.4,634.2 2350.1,623 2353.2,611.1 2357,595.8 2361,580.8 2364.8,565.9 2368,554.9 2370.8,543.8 2373.5,536.7 2376,530.5 2378.2,526.2 2380.7,518.9 2383.6,510.1 2386.6,496.5 2389.4,484.5 2392,469.4 2394.4,453.2 2396.1,441.3 2397,442.9 2398.3,445 2400.1,443.1 2402.6,432.6 2405.5,419.9 2408.2,409.8 2410.3,405.7 2412.2,403.8 2414,402.3 2415.9,397.7 2417.8,391.4 2419.8,386.1 2422.2,380.8 2424.8,376.5 2427.1,373.1 2428.6,370.9 2429.9,371.8 2431.4,370.9 2433.7,365.7 2436.3,359 2438.7,353.8 2440.7,353.7 2442.6,354.5 2444.4,353.9 2446.2,351 2448,344.6 2450.2,341.5 2452.9,337.5 2456,336.6 2458.9,334.3 2461.2,331.4 2463.3,329.8 2466.2,326.5 2470.7,322.9 2475.9,319.1 2480.7,314.5 2484.3,312.4 2487.4,312.1 2490.8,310.9 2495.2,306 2499.9,301 2503.8,298.2 2506.2,295.5 2507.7,293.6 2509.6,293.3 2512.4,291.1 2515.6,290.8 2518.3,289.8 2520.2,291.3 2521.7,293.8 2522.7,295.3 2524,298.1 2526,301.1 2528.5,304.9 2531.4,306.8 2534.7,308.3 2538.6,310.6 2543.4,312.7 2548.7,314.1 2553.1,315.3 2555.7,317.4 2557.3,318 2558.9,319.2 2560.9,320.2 2562.9,320 2564.7,320.2 2566.2,321.5 2567.6,323.1 2569,323.6 2570.2,322.6 2571.4,322.3 2573.4,322.5 2576.9,323.4 2581.2,325.7 2585,328.6 2587.5,332.6 2589.5,333.5 2592.2,337.6 2596.2,340.7 2600.8,343.9 2605.2,348.7 2609.3,351.7 2613.2,356.4 2616.8,361.2 2619.9,363.9 2622.7,368.5 2625.5,370.9 2628.5,375.1 2631.4,379.7 2634.2,384.6 2636.7,386.4 2639.1,388.1 2641.5,390.5 2644,395.2 2646.5,400.8 2648.7,405 2650.7,407.8 2652.6,411.3 2653.8,412.8 2653.8,814.7" fill="#2f3f50" clip-path="url(#cp4)"/><line x1="1973" x2="2653.8" y1="322.6" y2="322.6" stroke="rgba(255,255,255,0.062)" stroke-width="2"/><line x1="1973" x2="2653.8" y1="429.7" y2="429.7" stroke="rgba(255,255,255,0.062)" stroke-width="2"/><line x1="1973" x2="2653.8" y1="536.8" y2="536.8" stroke="rgba(255,255,255,0.062)" stroke-width="2"/><line x1="1973" x2="2653.8" y1="643.9" y2="643.9" stroke="rgba(255,255,255,0.062)" stroke-width="2"/><line x1="1973" x2="2653.8" y1="751" y2="751" stroke="rgba(255,255,255,0.062)" stroke-width="2"/><line x1="2050.7" x2="2050.7" y1="272" y2="814.7" stroke="rgba(255,255,255,0.062)" stroke-width="2"/><line x1="2220.6" x2="2220.6" y1="272" y2="814.7" stroke="rgba(255,255,255,0.062)" stroke-width="2"/><line x1="2390.9" x2="2390.9" y1="272" y2="814.7" stroke="rgba(255,255,255,0.062)" stroke-width="2"/><line x1="2562.4" x2="2562.4" y1="272" y2="814.7" stroke="rgba(255,255,255,0.062)" stroke-width="2"/><line x1="1886.4" x2="1886.4" y1="265" y2="850.5" stroke="#31323c" stroke-width="2.8"/><line x1="1973" x2="1973" y1="272" y2="813.2" stroke="rgba(255,255,255,0.075)" stroke-width="2.6"/><line x1="1971.7" x2="2653.8" y1="814.7" y2="814.7" stroke="rgba(255,255,255,0.075)" stroke-width="3"/><polyline points="1972.7,432 1977.5,441.7 1978.7,442.1 1980.3,440.9 1982.1,441 1983.9,442 1985.8,442.5 1987.5,443.7 1988.7,443.3 1989.7,442.4 1991,440.9 1992.7,442.6 1994.7,444.6 1996.9,448.9 1999.4,452.5 2002.2,455.6 2005,460.8 2007.9,462.4 2010.8,462.6 2013.1,463.3 2014.3,463.7 2014.9,464.7 2015.8,466.5 2017.4,465.5 2019.2,465.2 2021.2,465.3 2023.3,466.1 2025.6,468.6 2027.9,469.8 2030.1,471.1 2032.4,470.6 2034.7,470.2 2037.2,467.8 2039.7,465.2 2042.2,463 2044.8,463.2 2047.3,466.1 2049.5,467.3 2051,466.5 2052.2,465.2 2053.5,465 2055.4,468.5 2057.4,473.7 2058.9,477.1 2060.2,477.3 2062.1,475.2 2064.3,475.8 2067.1,477.2 2070.2,481.6 2072.4,483.9 2073.4,489.8 2074.9,501 2076.4,515 2077.8,529.4 2079.1,547.4 2080.5,562.6 2081.7,576.4 2083,590.9 2084.5,603.7 2086.4,614.3 2088.6,624.6 2091.3,635.3 2094.8,646.7 2098.7,656.3 2102,664.5 2104.1,673.6 2105.6,681.7 2107.4,688.7 2109.9,695.5 2112.7,698.7 2115.5,703.1 2118.2,705.8 2120.9,707.6 2123.6,711.4 2126.3,714.5 2129,720.1 2131.7,723.8 2134.5,729.1 2137.2,733.5 2139.8,737 2142.1,739.2 2144.3,738.6 2146.5,738.1 2149,741.5 2151.5,743.4 2153.2,745.9 2155.9,764.2 2158.6,767.7 2162.3,771.9 2165.4,776.6 2167.2,774.5 2168.3,771.7 2169.4,769.5 2170.7,765.2 2171.9,761.3 2172.7,758.2 2176.2,779.1 2178,779.7 2180.5,778.7 2182.9,780 2184.5,782 2185.9,785.4 2188.3,788.6 2192.4,788.3 2197.3,787.9 2201.8,787.2 2205.1,783.3 2208,779.8 2211.2,779.1 2214.6,779.4 2218.3,780.2 2223.3,781.9 2231.2,784.1 2240.6,785.6 2247.6,786 2250.4,790.1 2250.9,793.3 2251.6,795.3 2253.1,796.4 2254.9,796.4 2257,795.9 2259.5,795.7 2262.5,791.4 2266.4,789.1 2271.9,784.7 2278.4,782 2283.9,778.6 2287.6,776.7 2290.4,775.9 2293.4,775.6 2297,771.5 2300.7,768 2304.2,765 2307.4,762.1 2310.5,758.3 2313.6,755.1 2316.9,755.1 2320.3,753.3 2323,751.9 2324.9,749.8 2326.2,746.9 2327.1,743.9 2328.2,733.6 2329.7,719.5 2331.1,708.4 2332,704.5 2332.7,704.8 2334.3,700.7 2337.2,685.7 2341,665 2344.5,646.9 2347.4,634.2 2350.1,623 2353.2,611.1 2357,595.8 2361,580.8 2364.8,565.9 2368,554.9 2370.8,543.8 2373.5,536.7 2376,530.5 2378.2,526.2 2380.7,518.9 2383.6,510.1 2386.6,496.5 2389.4,484.5 2392,469.4 2394.4,453.2 2396.1,441.3 2397,442.9 2398.3,445 2400.1,443.1 2402.6,432.6 2405.5,419.9 2408.2,409.8 2410.3,405.7 2412.2,403.8 2414,402.3 2415.9,397.7 2417.8,391.4 2419.8,386.1 2422.2,380.8 2424.8,376.5 2427.1,373.1 2428.6,370.9 2429.9,371.8 2431.4,370.9 2433.7,365.7 2436.3,359 2438.7,353.8 2440.7,353.7 2442.6,354.5 2444.4,353.9 2446.2,351 2448,344.6 2450.2,341.5 2452.9,337.5 2456,336.6 2458.9,334.3 2461.2,331.4 2463.3,329.8 2466.2,326.5 2470.7,322.9 2475.9,319.1 2480.7,314.5 2484.3,312.4 2487.4,312.1 2490.8,310.9 2495.2,306 2499.9,301 2503.8,298.2 2506.2,295.5 2507.7,293.6 2509.6,293.3 2512.4,291.1 2515.6,290.8 2518.3,289.8 2520.2,291.3 2521.7,293.8 2522.7,295.3 2524,298.1 2526,301.1 2528.5,304.9 2531.4,306.8 2534.7,308.3 2538.6,310.6 2543.4,312.7 2548.7,314.1 2553.1,315.3 2555.7,317.4 2557.3,318 2558.9,319.2 2560.9,320.2 2562.9,320 2564.7,320.2 2566.2,321.5 2567.6,323.1 2569,323.6 2570.2,322.6 2571.4,322.3 2573.4,322.5 2576.9,323.4 2581.2,325.7 2585,328.6 2587.5,332.6 2589.5,333.5 2592.2,337.6 2596.2,340.7 2600.8,343.9 2605.2,348.7 2609.3,351.7 2613.2,356.4 2616.8,361.2 2619.9,363.9 2622.7,368.5 2625.5,370.9 2628.5,375.1 2631.4,379.7 2634.2,384.6 2636.7,386.4 2639.1,388.1 2641.5,390.5 2644,395.2 2646.5,400.8 2648.7,405 2650.7,407.8 2652.6,411.3 2653.8,412.8" fill="none" stroke="#5cc3f3" stroke-width="2.0" stroke-linejoin="round" clip-path="url(#cp4)"/><text x="1959.5" y="329.8" text-anchor="end" class="tk">2.05M</text><text x="1959.5" y="436.9" text-anchor="end" class="tk">2M</text><text x="1959.5" y="544" text-anchor="end" class="tk">1.95M</text><text x="1959.5" y="651.1" text-anchor="end" class="tk">1.9M</text><text x="1959.5" y="758.2" text-anchor="end" class="tk">1.85M</text><text x="2049" y="842.5" text-anchor="middle" class="tk">09 Jan</text><text x="2219" y="842.5" text-anchor="middle" class="tk">06:00</text><text x="2390" y="842.5" text-anchor="middle" class="tk">12:00</text><text x="2560" y="842.5" text-anchor="middle" class="tk">18:00</text><text x="1876" y="556.8" transform="rotate(-90 1876 556.8)" text-anchor="middle" class="al" textLength="204" lengthAdjust="spacingAndGlyphs">Supply Pressure (Pa)</text><text x="1863" y="231.5" class="ti" textLength="299" lengthAdjust="spacingAndGlyphs">Polycold Supply Pressure</text></svg></div><div class="panel" style="left:1836px;top:884px;width:854px;height:691.5px"><svg width="854" height="691.5" viewBox="1836 884 854 691.5"><clipPath id="cp5"><rect x="1972.6" y="972.4" width="681.4000000000001" height="543.1"/></clipPath><polygon points="1972.8,1515.5 1972.8,1148.4 1976.1,1133.2 1979.7,1130.4 1982.4,1122.7 1985.2,1124.9 1989.3,1138.7 1991.6,1159.4 1993.5,1149.7 1994.9,1155.3 1997.6,1141.4 1999.8,1140.9 2002.6,1164.9 2004.5,1144.2 2008,1137.4 2011.4,1135.4 2014.2,1148 2016.9,1166.5 2019.7,1180.1 2022.5,1164.9 2026.6,1158 2028.9,1178.8 2031.5,1167.7 2034.1,1165.8 2036.7,1185 2039.2,1200.3 2041.8,1224.3 2046,1249.2 2050.1,1232.6 2051.5,1247.8 2054.2,1228.6 2057,1205 2061.2,1185.7 2065.3,1182.9 2069.5,1191.2 2072.9,1173 2076.4,1153.9 2080.5,1202.2 2083.3,1224.3 2086,1239.9 2088.8,1260.3 2091.6,1263.8 2094.3,1265.8 2097.1,1274.1 2099.8,1283.2 2102.6,1293.4 2106,1308.6 2108.2,1287.9 2110.9,1289.2 2113.7,1293.7 2116.4,1293.7 2119.2,1299 2122,1307.5 2124.7,1318.8 2127.5,1326.6 2130.3,1344.2 2133,1360.8 2135.8,1379.1 2138.7,1374.2 2141.7,1360.7 2144.6,1351.4 2146.8,1365.3 2149.6,1350.1 2153.1,1374.5 2156.5,1401.2 2159.2,1405.7 2162,1409.5 2166.2,1387.4 2167.6,1413.6 2170.3,1402.2 2173.1,1392.9 2175.9,1420.5 2179.4,1425.3 2182.8,1431.6 2186.4,1415 2191.1,1423.3 2193.8,1432.9 2196.6,1444 2199.4,1443 2202.1,1433.9 2204.9,1428.8 2209,1431.6 2211.8,1459.6 2214.5,1486.8 2218.7,1437.1 2221.4,1438.2 2224.2,1436.6 2228.4,1446.8 2231.1,1449.4 2233.9,1443.6 2236.6,1442.6 2240.8,1459.2 2244.1,1462 2246.9,1496.5 2250.5,1428.8 2254.6,1442.6 2257.3,1435.2 2260.1,1430.2 2262.3,1413.6 2267,1427.4 2269.8,1422.7 2272.6,1408.1 2275.3,1419.2 2278.1,1403.1 2280.9,1392.9 2283.7,1397.7 2286.4,1404 2290.5,1383.2 2294.7,1384.6 2298.8,1402.6 2301.6,1394.3 2304.3,1387.8 2307.1,1373.6 2309.8,1383.4 2312.6,1397 2315.4,1381.8 2318.2,1379 2320.9,1386 2325.1,1394.3 2328.6,1356.2 2332,1315.5 2336.1,1293.4 2340,1268.6 2343,1255.8 2346,1245 2348.8,1229.2 2351.6,1215 2354.8,1203.4 2358,1190 2360.7,1179.6 2363.3,1169 2366,1157.6 2369.5,1142.9 2373,1130 2376.5,1128.3 2380,1121.4 2382.8,1097.3 2387.1,1080.4 2391.3,1060.6 2393.4,1058.4 2396.3,1039.3 2399.1,1054.9 2403.3,1064.8 2406.2,1066.2 2409.7,1050.6 2413.2,1039.3 2416.8,1047.1 2421,1036.5 2424.6,1072.8 2428.1,1103 2432.3,1052.1 2435.2,1051.4 2438,1050.6 2440.8,1061.7 2443.7,1074.7 2446.1,1052.1 2448.6,1026.6 2452.9,1018.1 2455,1040.7 2458.5,1053.5 2461.4,1042.2 2464.9,1046.4 2466.3,1033.7 2470.5,1039.3 2472.7,1052.1 2476.2,1025.2 2480.5,1036.5 2484.7,1028 2489,1023.8 2491.8,1016.7 2494.6,1010.6 2497.4,1002.5 2500.3,995.5 2503.8,1012.4 2508,994 2510.8,1001.1 2513.7,1012.4 2515.8,989.1 2520.1,999.7 2523.6,991.2 2526.1,998.8 2528.6,1008.2 2532.8,1013.9 2537,1002.5 2540.6,1004 2543.1,1018.8 2545.5,1029.4 2548.3,1012.6 2551.2,996.2 2553.3,1023.8 2555.4,1018.1 2558.3,1022.3 2562.5,1020.9 2563.9,1025.2 2565.3,998.3 2568.2,1016.7 2569.6,1005.4 2572.1,1016.7 2574.5,1029.4 2577.3,1023.5 2580.2,1016.7 2583.7,1053.5 2587.3,1036.5 2591.5,1062 2593.6,1047.8 2596.1,1038.5 2598.6,1029.4 2602.1,1030.8 2605,1037.2 2607.8,1048.9 2610.6,1060.6 2614.9,1042.2 2618.4,1074.7 2620.5,1057.7 2624.8,1056.3 2629,1077.5 2631.8,1074.3 2634.7,1078.9 2638.9,1081.8 2641.7,1090.3 2646,1118.6 2648.8,1159.6 2650.9,1139.1 2652.3,1149.7 2654,1132.7 2654,1515.5" fill="#2f3f50" clip-path="url(#cp5)"/><line x1="1972.6" x2="2654" y1="1066.6" y2="1066.6" stroke="rgba(255,255,255,0.062)" stroke-width="2"/><line x1="1972.6" x2="2654" y1="1172.1" y2="1172.1" stroke="rgba(255,255,255,0.062)" stroke-width="2"/><line x1="1972.6" x2="2654" y1="1277.6" y2="1277.6" stroke="rgba(255,255,255,0.062)" stroke-width="2"/><line x1="1972.6" x2="2654" y1="1383.1" y2="1383.1" stroke="rgba(255,255,255,0.062)" stroke-width="2"/><line x1="1972.6" x2="2654" y1="1488.7" y2="1488.7" stroke="rgba(255,255,255,0.062)" stroke-width="2"/><line x1="2050.6" x2="2050.6" y1="972.4" y2="1515.5" stroke="rgba(255,255,255,0.062)" stroke-width="2"/><line x1="2221" x2="2221" y1="972.4" y2="1515.5" stroke="rgba(255,255,255,0.062)" stroke-width="2"/><line x1="2390.9" x2="2390.9" y1="972.4" y2="1515.5" stroke="rgba(255,255,255,0.062)" stroke-width="2"/><line x1="2562.2" x2="2562.2" y1="972.4" y2="1515.5" stroke="rgba(255,255,255,0.062)" stroke-width="2"/><line x1="1886.9" x2="1886.9" y1="966" y2="1549.4" stroke="#31323c" stroke-width="2.8"/><line x1="1972.6" x2="1972.6" y1="972.4" y2="1514" stroke="rgba(255,255,255,0.075)" stroke-width="2.6"/><line x1="1971.3" x2="2654" y1="1515.5" y2="1515.5" stroke="rgba(255,255,255,0.075)" stroke-width="3"/><polyline points="1972.8,1148.4 1976.1,1133.2 1979.7,1130.4 1982.4,1122.7 1985.2,1124.9 1989.3,1138.7 1991.6,1159.4 1993.5,1149.7 1994.9,1155.3 1997.6,1141.4 1999.8,1140.9 2002.6,1164.9 2004.5,1144.2 2008,1137.4 2011.4,1135.4 2014.2,1148 2016.9,1166.5 2019.7,1180.1 2022.5,1164.9 2026.6,1158 2028.9,1178.8 2031.5,1167.7 2034.1,1165.8 2036.7,1185 2039.2,1200.3 2041.8,1224.3 2046,1249.2 2050.1,1232.6 2051.5,1247.8 2054.2,1228.6 2057,1205 2061.2,1185.7 2065.3,1182.9 2069.5,1191.2 2072.9,1173 2076.4,1153.9 2080.5,1202.2 2083.3,1224.3 2086,1239.9 2088.8,1260.3 2091.6,1263.8 2094.3,1265.8 2097.1,1274.1 2099.8,1283.2 2102.6,1293.4 2106,1308.6 2108.2,1287.9 2110.9,1289.2 2113.7,1293.7 2116.4,1293.7 2119.2,1299 2122,1307.5 2124.7,1318.8 2127.5,1326.6 2130.3,1344.2 2133,1360.8 2135.8,1379.1 2138.7,1374.2 2141.7,1360.7 2144.6,1351.4 2146.8,1365.3 2149.6,1350.1 2153.1,1374.5 2156.5,1401.2 2159.2,1405.7 2162,1409.5 2166.2,1387.4 2167.6,1413.6 2170.3,1402.2 2173.1,1392.9 2175.9,1420.5 2179.4,1425.3 2182.8,1431.6 2186.4,1415 2191.1,1423.3 2193.8,1432.9 2196.6,1444 2199.4,1443 2202.1,1433.9 2204.9,1428.8 2209,1431.6 2211.8,1459.6 2214.5,1486.8 2218.7,1437.1 2221.4,1438.2 2224.2,1436.6 2228.4,1446.8 2231.1,1449.4 2233.9,1443.6 2236.6,1442.6 2240.8,1459.2 2244.1,1462 2246.9,1496.5 2250.5,1428.8 2254.6,1442.6 2257.3,1435.2 2260.1,1430.2 2262.3,1413.6 2267,1427.4 2269.8,1422.7 2272.6,1408.1 2275.3,1419.2 2278.1,1403.1 2280.9,1392.9 2283.7,1397.7 2286.4,1404 2290.5,1383.2 2294.7,1384.6 2298.8,1402.6 2301.6,1394.3 2304.3,1387.8 2307.1,1373.6 2309.8,1383.4 2312.6,1397 2315.4,1381.8 2318.2,1379 2320.9,1386 2325.1,1394.3 2328.6,1356.2 2332,1315.5 2336.1,1293.4 2340,1268.6 2343,1255.8 2346,1245 2348.8,1229.2 2351.6,1215 2354.8,1203.4 2358,1190 2360.7,1179.6 2363.3,1169 2366,1157.6 2369.5,1142.9 2373,1130 2376.5,1128.3 2380,1121.4 2382.8,1097.3 2387.1,1080.4 2391.3,1060.6 2393.4,1058.4 2396.3,1039.3 2399.1,1054.9 2403.3,1064.8 2406.2,1066.2 2409.7,1050.6 2413.2,1039.3 2416.8,1047.1 2421,1036.5 2424.6,1072.8 2428.1,1103 2432.3,1052.1 2435.2,1051.4 2438,1050.6 2440.8,1061.7 2443.7,1074.7 2446.1,1052.1 2448.6,1026.6 2452.9,1018.1 2455,1040.7 2458.5,1053.5 2461.4,1042.2 2464.9,1046.4 2466.3,1033.7 2470.5,1039.3 2472.7,1052.1 2476.2,1025.2 2480.5,1036.5 2484.7,1028 2489,1023.8 2491.8,1016.7 2494.6,1010.6 2497.4,1002.5 2500.3,995.5 2503.8,1012.4 2508,994 2510.8,1001.1 2513.7,1012.4 2515.8,989.1 2520.1,999.7 2523.6,991.2 2526.1,998.8 2528.6,1008.2 2532.8,1013.9 2537,1002.5 2540.6,1004 2543.1,1018.8 2545.5,1029.4 2548.3,1012.6 2551.2,996.2 2553.3,1023.8 2555.4,1018.1 2558.3,1022.3 2562.5,1020.9 2563.9,1025.2 2565.3,998.3 2568.2,1016.7 2569.6,1005.4 2572.1,1016.7 2574.5,1029.4 2577.3,1023.5 2580.2,1016.7 2583.7,1053.5 2587.3,1036.5 2591.5,1062 2593.6,1047.8 2596.1,1038.5 2598.6,1029.4 2602.1,1030.8 2605,1037.2 2607.8,1048.9 2610.6,1060.6 2614.9,1042.2 2618.4,1074.7 2620.5,1057.7 2624.8,1056.3 2629,1077.5 2631.8,1074.3 2634.7,1078.9 2638.9,1081.8 2641.7,1090.3 2646,1118.6 2648.8,1159.6 2650.9,1139.1 2652.3,1149.7 2654,1132.7" fill="none" stroke="#5cc3f3" stroke-width="2.0" stroke-linejoin="round" clip-path="url(#cp5)"/><text x="1959.5" y="1073.8" text-anchor="end" class="tk">440K</text><text x="1959.5" y="1179.3" text-anchor="end" class="tk">430K</text><text x="1959.5" y="1284.8" text-anchor="end" class="tk">420K</text><text x="1959.5" y="1390.3" text-anchor="end" class="tk">410K</text><text x="1959.5" y="1495.9" text-anchor="end" class="tk">400K</text><text x="2049" y="1543" text-anchor="middle" class="tk">09 Jan</text><text x="2219" y="1543" text-anchor="middle" class="tk">06:00</text><text x="2390" y="1543" text-anchor="middle" class="tk">12:00</text><text x="2560" y="1543" text-anchor="middle" class="tk">18:00</text><text x="1876" y="1255.6" transform="rotate(-90 1876 1255.6)" text-anchor="middle" class="al" textLength="204" lengthAdjust="spacingAndGlyphs">Return Pressure (Pa)</text><text x="1863" y="931.5" class="ti" textLength="299" lengthAdjust="spacingAndGlyphs">Polycold Return Pressure</text></svg></div><div class="panel" style="left:110px;top:710px;width:854px;height:692px"><svg width="854" height="692" viewBox="110 710 854 692"><clipPath id="cp6"><rect x="274.5" y="798.2" width="653.2" height="541.0999999999999"/></clipPath><polygon points="274.5,798.2 274.5,888.2 356.7,888.2 359.3,886.4 360.4,897.5 362.2,882.7 365.2,880.8 367.1,882.7 367.8,816.7 368.5,901.2 369.7,893.8 370,896.7 370.4,900.6 370.9,905.2 371.4,910.3 371.9,915.6 372.4,921 373,926.2 373.4,930.9 373.8,935.2 374.1,939.4 374.5,943.5 374.8,947.5 375.1,951.6 375.5,955.7 375.9,959.9 376.3,964.2 376.8,968.5 377.2,972.7 377.7,976.9 378.3,981.1 378.8,985.6 379.4,990.4 380.1,995.6 380.8,1001.3 381.6,1007.8 382.4,1014.9 383.4,1022.6 384.3,1030.5 385.3,1038.5 386.3,1046.3 387.3,1053.7 388.2,1060.6 389.1,1066.8 390,1072.5 390.8,1077.9 391.7,1083.1 392.6,1088.2 393.5,1093.5 394.5,1099.1 395.6,1105.1 396.8,1111.5 398,1118.2 399.3,1125.1 400.7,1132.2 402.1,1139.4 403.6,1146.5 405.1,1153.7 406.7,1160.7 408.4,1167.7 410.1,1174.9 411.9,1182 413.7,1189.2 415.6,1196.3 417.5,1203.2 419.5,1209.9 421.6,1216.3 423.7,1222.5 425.9,1228.6 428.1,1234.5 430.4,1240.2 432.7,1245.7 435.1,1251 437.6,1256 440.1,1260.8 442.7,1265.3 445.3,1269.5 448,1273.5 450.7,1277.3 453.5,1280.8 456.4,1284.2 459.3,1287.4 462.3,1290.5 465.3,1293.4 468.4,1296.1 471.6,1298.7 474.8,1301 478.1,1303.2 481.5,1305.3 484.8,1307.2 488.3,1309 491.8,1310.6 495.3,1312.1 498.8,1313.4 502.5,1314.5 506.2,1315.6 510,1316.5 513.9,1317.4 518,1318.3 522.3,1319.1 526.7,1319.8 531.3,1320.5 536,1321.1 540.8,1321.6 545.6,1322 550.3,1322.4 555,1322.7 559.7,1322.9 564.6,1323 569.6,1323.1 574.5,1323 579.3,1322.9 583.9,1322.9 588.2,1322.8 592.1,1322.7 595.7,1322.6 599.1,1322.6 602.2,1322.5 605.2,1322.4 607.8,1322.2 610.1,1322.1 612,1322.1 613.6,1322 614.3,1292.3 621,1291.2 622.2,1286.3 623.8,1279.8 625.7,1272.1 627.9,1263.5 630.1,1254.3 632.4,1245 634.6,1235.9 636.6,1227.4 638.5,1219 640.4,1210.1 642.2,1201.1 644.1,1192.1 645.9,1183.4 647.7,1175.1 649.6,1167.5 651.4,1160.7 653.4,1154.7 655.4,1149.2 657.6,1144.3 659.7,1139.9 661.7,1136 663.5,1132.6 665.1,1129.7 666.2,1127.4 666.5,1125 666.8,1122.1 667.1,1118.6 667.6,1114.6 668.1,1110.2 668.6,1105.2 669.2,1099.8 669.9,1094 670.6,1087.6 671.4,1080.6 672.3,1073 673.2,1065.1 674.2,1056.7 675.2,1048.2 676.3,1039.6 677.4,1031 678.6,1022.1 679.9,1012.6 681.3,1002.9 682.7,993 684.2,983.2 685.6,973.8 687.1,964.9 688.5,956.8 689.9,949.4 691.2,942.4 692.6,935.9 693.9,929.8 695.3,924 696.7,918.6 698.1,913.5 699.6,908.6 701.2,904 703,899.6 704.9,895.5 706.8,891.7 708.6,888.3 710.2,885.3 711.6,882.8 712.6,880.8 713.8,881 715,883.5 716.2,886.9 717.4,890.3 718.6,892.7 719.8,893.7 721,893 722.2,890.7 723.4,887.5 724.6,884.3 725.8,881.8 727,880.7 728.2,881.4 729.4,883.4 730.6,886.5 731.8,889.6 733,892.1 734.2,893.2 735.4,892.8 736.6,890.9 737.8,888.1 739,885.1 740.2,882.6 741.4,881.4 742.6,881.7 743.8,883.5 745,886.1 746.2,889.1 747.4,891.5 748.6,892.8 749.8,892.6 751,891.1 752.2,888.6 753.4,885.8 754.6,883.4 755.8,882.1 757,882.1 758.2,883.5 759.4,885.9 760.6,888.6 761.8,890.9 763,892.3 764.2,892.4 765.4,891.2 766.6,889 767.8,886.4 769,884.1 770.2,882.7 771.4,882.5 772.6,883.6 773.8,885.7 775,888.2 776.2,890.5 777.4,891.9 778.6,892.2 779.8,891.3 781,889.4 782.2,887 783.4,884.8 784.6,883.3 785.8,883 787,883.8 788.2,885.6 789.4,887.9 790.6,890.1 791.8,891.6 793,892 794.2,891.4 795.4,889.7 796.6,887.5 797.8,885.4 799,883.9 800.2,883.4 801.4,883.9 802.6,885.5 803.8,887.6 805,889.7 806.2,891.2 807.4,891.8 808.6,891.4 809.8,890 811,888 812.2,886 813.4,884.4 814.6,883.8 815.8,884.1 817,885.5 818.2,887.4 819.4,889.4 820.6,890.9 821.8,891.7 823,891.4 824.2,890.2 825.4,888.4 826.6,886.5 827.8,884.9 829,884.2 830.2,884.4 831.4,885.5 832.6,887.2 833.8,889.1 835,890.6 836.2,891.5 837.4,891.4 838.6,890.4 839.8,888.8 841,887 842.2,885.4 843.4,884.6 844.6,884.6 845.8,885.5 847,887 848.2,888.8 849.4,890.4 850.6,891.3 851.8,891.4 853,890.6 854.2,889.1 855.4,887.4 856.6,885.9 857.8,884.9 859,884.8 860.2,885.5 861.4,886.9 862.6,888.6 863.8,890.1 865,891.1 866.2,891.4 867.4,890.7 868.6,889.4 869.8,887.8 871,886.3 872.2,885.3 873.4,885.1 874.6,885.6 875.8,886.8 877,888.4 878.2,889.9 879.4,891 880.6,891.3 881.8,890.9 883,889.7 884.2,888.2 885.4,886.7 886.6,885.7 887.8,885.3 889,885.7 890.2,886.8 891.4,888.3 892.6,889.7 893.8,890.8 895,891.3 896.2,891 897.4,890 898.6,888.6 899.8,887.1 901,886 902.2,885.6 903.4,885.8 904.6,886.8 905.8,888.1 907,889.6 908.2,890.7 909.4,891.2 910.6,891.1 911.8,890.2 913,888.9 914.2,887.5 915.4,886.4 916.6,885.8 917.8,886 919,886.8 920.2,888 921.4,889.4 922.6,890.6 923.8,891.2 925,891.1 926.2,890.4 927.4,889.2 927.7,887.9 927.7,798.2" fill="#2f3f50" clip-path="url(#cp6)"/><line x1="274.5" x2="927.7" y1="842.6" y2="842.6" stroke="rgba(255,255,255,0.062)" stroke-width="2"/><line x1="274.5" x2="927.7" y1="948.5" y2="948.5" stroke="rgba(255,255,255,0.062)" stroke-width="2"/><line x1="274.5" x2="927.7" y1="1054.5" y2="1054.5" stroke="rgba(255,255,255,0.062)" stroke-width="2"/><line x1="274.5" x2="927.7" y1="1160.5" y2="1160.5" stroke="rgba(255,255,255,0.062)" stroke-width="2"/><line x1="274.5" x2="927.7" y1="1266.4" y2="1266.4" stroke="rgba(255,255,255,0.062)" stroke-width="2"/><line x1="349.1" x2="349.1" y1="798.2" y2="1339.3" stroke="rgba(255,255,255,0.062)" stroke-width="2"/><line x1="510.8" x2="510.8" y1="798.2" y2="1339.3" stroke="rgba(255,255,255,0.062)" stroke-width="2"/><line x1="675" x2="675" y1="798.2" y2="1339.3" stroke="rgba(255,255,255,0.062)" stroke-width="2"/><line x1="838.4" x2="838.4" y1="798.2" y2="1339.3" stroke="rgba(255,255,255,0.062)" stroke-width="2"/><line x1="160.4" x2="160.4" y1="790.7" y2="1375.8" stroke="#31323c" stroke-width="2.8"/><line x1="274.5" x2="274.5" y1="798.2" y2="1337.8" stroke="rgba(255,255,255,0.075)" stroke-width="2.6"/><line x1="273.2" x2="927.7" y1="1339.3" y2="1339.3" stroke="rgba(255,255,255,0.075)" stroke-width="3"/><polyline points="274.5,888.2 356.7,888.2 359.3,886.4 360.4,897.5 362.2,882.7 365.2,880.8 367.1,882.7 367.8,816.7 368.5,901.2 369.7,893.8 370,896.7 370.4,900.6 370.9,905.2 371.4,910.3 371.9,915.6 372.4,921 373,926.2 373.4,930.9 373.8,935.2 374.1,939.4 374.5,943.5 374.8,947.5 375.1,951.6 375.5,955.7 375.9,959.9 376.3,964.2 376.8,968.5 377.2,972.7 377.7,976.9 378.3,981.1 378.8,985.6 379.4,990.4 380.1,995.6 380.8,1001.3 381.6,1007.8 382.4,1014.9 383.4,1022.6 384.3,1030.5 385.3,1038.5 386.3,1046.3 387.3,1053.7 388.2,1060.6 389.1,1066.8 390,1072.5 390.8,1077.9 391.7,1083.1 392.6,1088.2 393.5,1093.5 394.5,1099.1 395.6,1105.1 396.8,1111.5 398,1118.2 399.3,1125.1 400.7,1132.2 402.1,1139.4 403.6,1146.5 405.1,1153.7 406.7,1160.7 408.4,1167.7 410.1,1174.9 411.9,1182 413.7,1189.2 415.6,1196.3 417.5,1203.2 419.5,1209.9 421.6,1216.3 423.7,1222.5 425.9,1228.6 428.1,1234.5 430.4,1240.2 432.7,1245.7 435.1,1251 437.6,1256 440.1,1260.8 442.7,1265.3 445.3,1269.5 448,1273.5 450.7,1277.3 453.5,1280.8 456.4,1284.2 459.3,1287.4 462.3,1290.5 465.3,1293.4 468.4,1296.1 471.6,1298.7 474.8,1301 478.1,1303.2 481.5,1305.3 484.8,1307.2 488.3,1309 491.8,1310.6 495.3,1312.1 498.8,1313.4 502.5,1314.5 506.2,1315.6 510,1316.5 513.9,1317.4 518,1318.3 522.3,1319.1 526.7,1319.8 531.3,1320.5 536,1321.1 540.8,1321.6 545.6,1322 550.3,1322.4 555,1322.7 559.7,1322.9 564.6,1323 569.6,1323.1 574.5,1323 579.3,1322.9 583.9,1322.9 588.2,1322.8 592.1,1322.7 595.7,1322.6 599.1,1322.6 602.2,1322.5 605.2,1322.4 607.8,1322.2 610.1,1322.1 612,1322.1 613.6,1322 614.3,1292.3 621,1291.2 622.2,1286.3 623.8,1279.8 625.7,1272.1 627.9,1263.5 630.1,1254.3 632.4,1245 634.6,1235.9 636.6,1227.4 638.5,1219 640.4,1210.1 642.2,1201.1 644.1,1192.1 645.9,1183.4 647.7,1175.1 649.6,1167.5 651.4,1160.7 653.4,1154.7 655.4,1149.2 657.6,1144.3 659.7,1139.9 661.7,1136 663.5,1132.6 665.1,1129.7 666.2,1127.4 666.5,1125 666.8,1122.1 667.1,1118.6 667.6,1114.6 668.1,1110.2 668.6,1105.2 669.2,1099.8 669.9,1094 670.6,1087.6 671.4,1080.6 672.3,1073 673.2,1065.1 674.2,1056.7 675.2,1048.2 676.3,1039.6 677.4,1031 678.6,1022.1 679.9,1012.6 681.3,1002.9 682.7,993 684.2,983.2 685.6,973.8 687.1,964.9 688.5,956.8 689.9,949.4 691.2,942.4 692.6,935.9 693.9,929.8 695.3,924 696.7,918.6 698.1,913.5 699.6,908.6 701.2,904 703,899.6 704.9,895.5 706.8,891.7 708.6,888.3 710.2,885.3 711.6,882.8 712.6,880.8 713.8,881 715,883.5 716.2,886.9 717.4,890.3 718.6,892.7 719.8,893.7 721,893 722.2,890.7 723.4,887.5 724.6,884.3 725.8,881.8 727,880.7 728.2,881.4 729.4,883.4 730.6,886.5 731.8,889.6 733,892.1 734.2,893.2 735.4,892.8 736.6,890.9 737.8,888.1 739,885.1 740.2,882.6 741.4,881.4 742.6,881.7 743.8,883.5 745,886.1 746.2,889.1 747.4,891.5 748.6,892.8 749.8,892.6 751,891.1 752.2,888.6 753.4,885.8 754.6,883.4 755.8,882.1 757,882.1 758.2,883.5 759.4,885.9 760.6,888.6 761.8,890.9 763,892.3 764.2,892.4 765.4,891.2 766.6,889 767.8,886.4 769,884.1 770.2,882.7 771.4,882.5 772.6,883.6 773.8,885.7 775,888.2 776.2,890.5 777.4,891.9 778.6,892.2 779.8,891.3 781,889.4 782.2,887 783.4,884.8 784.6,883.3 785.8,883 787,883.8 788.2,885.6 789.4,887.9 790.6,890.1 791.8,891.6 793,892 794.2,891.4 795.4,889.7 796.6,887.5 797.8,885.4 799,883.9 800.2,883.4 801.4,883.9 802.6,885.5 803.8,887.6 805,889.7 806.2,891.2 807.4,891.8 808.6,891.4 809.8,890 811,888 812.2,886 813.4,884.4 814.6,883.8 815.8,884.1 817,885.5 818.2,887.4 819.4,889.4 820.6,890.9 821.8,891.7 823,891.4 824.2,890.2 825.4,888.4 826.6,886.5 827.8,884.9 829,884.2 830.2,884.4 831.4,885.5 832.6,887.2 833.8,889.1 835,890.6 836.2,891.5 837.4,891.4 838.6,890.4 839.8,888.8 841,887 842.2,885.4 843.4,884.6 844.6,884.6 845.8,885.5 847,887 848.2,888.8 849.4,890.4 850.6,891.3 851.8,891.4 853,890.6 854.2,889.1 855.4,887.4 856.6,885.9 857.8,884.9 859,884.8 860.2,885.5 861.4,886.9 862.6,888.6 863.8,890.1 865,891.1 866.2,891.4 867.4,890.7 868.6,889.4 869.8,887.8 871,886.3 872.2,885.3 873.4,885.1 874.6,885.6 875.8,886.8 877,888.4 878.2,889.9 879.4,891 880.6,891.3 881.8,890.9 883,889.7 884.2,888.2 885.4,886.7 886.6,885.7 887.8,885.3 889,885.7 890.2,886.8 891.4,888.3 892.6,889.7 893.8,890.8 895,891.3 896.2,891 897.4,890 898.6,888.6 899.8,887.1 901,886 902.2,885.6 903.4,885.8 904.6,886.8 905.8,888.1 907,889.6 908.2,890.7 909.4,891.2 910.6,891.1 911.8,890.2 913,888.9 914.2,887.5 915.4,886.4 916.6,885.8 917.8,886 919,886.8 920.2,888 921.4,889.4 922.6,890.6 923.8,891.2 925,891.1 926.2,890.4 927.4,889.2 927.7,887.9" fill="none" stroke="#5cc3f3" stroke-width="2.0" stroke-linejoin="round" clip-path="url(#cp6)"/><text x="261" y="849.8" text-anchor="end" class="tk">-100 °C</text><text x="261" y="955.7" text-anchor="end" class="tk">-110 °C</text><text x="261" y="1061.7" text-anchor="end" class="tk">-120 °C</text><text x="261" y="1167.7" text-anchor="end" class="tk">-130 °C</text><text x="261" y="1273.6" text-anchor="end" class="tk">-140 °C</text><text x="347" y="1368.3" text-anchor="middle" class="tk">09 Jan</text><text x="510.5" y="1368.3" text-anchor="middle" class="tk">06:00</text><text x="674.5" y="1368.3" text-anchor="middle" class="tk">12:00</text><text x="838" y="1368.3" text-anchor="middle" class="tk">18:00</text><text x="150" y="1081.5" transform="rotate(-90 150 1081.5)" text-anchor="middle" class="al" textLength="127.5" lengthAdjust="spacingAndGlyphs">Temperature</text><text x="139" y="757.3" class="ti" textLength="50" lengthAdjust="spacingAndGlyphs">CCD</text></svg></div><div class="panel" style="left:972px;top:710px;width:854px;height:692px"><svg width="854" height="692" viewBox="972 710 854 692"><clipPath id="cp7"><rect x="1136.3" y="798.5" width="653.6000000000001" height="543.0"/></clipPath><polygon points="1136.3,1341.5 1136.3,967 1138.7,993.5 1142.4,1014.8 1145.2,983.6 1148.8,1013.3 1150.6,1010.9 1153.4,1013.2 1155.7,994.1 1158,1013.2 1159.9,989.3 1162.1,1022.5 1164.7,990.7 1167.6,989.4 1170.8,1021.2 1174,999 1176.8,1012.7 1180.2,994.9 1183.9,1016.9 1185.7,998.9 1189,994.7 1193.1,1019.8 1195.5,1016.8 1198.4,996.2 1200.2,990 1203.8,989.7 1206.6,1011.3 1208.9,993.3 1211.5,1017.1 1214.4,999.1 1217.6,1020.9 1221.4,996.3 1223.4,1013.4 1225.8,998.1 1227.7,1012.5 1230.2,990.9 1233.1,1010.9 1235.4,998.1 1237.7,1017.9 1239.5,997.6 1243,1018.7 1247.1,989.8 1250.5,1015.3 1253.8,998.7 1257.7,995.7 1261.8,1019.5 1263.6,981.6 1267.7,1017.4 1271.8,1019 1274.5,996.9 1276.7,1011.9 1279.7,995.5 1281.6,997 1285.3,995.3 1289.1,1021.8 1292.5,1016.4 1296.1,998.4 1298.4,990.3 1301.1,1014.7 1304.3,1022.1 1307.4,995.1 1311.3,1020.1 1314.6,990 1316.9,1011.6 1320.1,1021.7 1323.8,982.5 1325.8,1012 1328.2,987.5 1330.4,1013.5 1334.3,994.9 1336.9,996.4 1340.2,1013.8 1342.7,1017.8 1344.7,988.4 1346.7,996.8 1349.8,991.1 1352.9,1014.3 1355.4,987.6 1358.8,1021.9 1361.4,995.6 1363.9,995.4 1367.1,1017.4 1369.1,987.3 1372.4,1014.1 1376.3,997.5 1378.3,1022 1382.4,989.5 1385.5,1021.6 1387.6,1029 1391.6,989.8 1395.2,1018.9 1397.3,990.8 1399.3,1022.2 1402.4,989.2 1405,1017.6 1407.8,987 1409.9,1012.1 1412.7,994.6 1414.5,1016.9 1417.4,991.2 1420.3,1016.3 1423.5,988.5 1426.8,1014 1430.8,997.5 1433.3,991.1 1436.8,1019.4 1440.7,1022.1 1443.1,996.8 1445.1,1018.8 1448.1,997.4 1452.3,1020.3 1456.2,987.9 1460.1,1018.5 1464.1,987.7 1466.9,1012.6 1470.9,987.9 1473.7,1012 1477.3,999.4 1479.1,1018.1 1481.4,996 1484.6,1013.6 1488.4,987.7 1492.2,1019.8 1494.7,998.1 1498.3,1017.1 1502.4,997.8 1505,1016.6 1506.8,994.1 1509.5,1020 1512.9,994.9 1515.4,1017.8 1518.4,987.6 1521.2,1019.5 1523.4,992 1525.2,1015.3 1529.1,992.4 1532.7,993.5 1536,1018.2 1539.3,988.2 1543,1020.4 1545.4,990.9 1547.6,1020.6 1549.5,993.3 1552.1,1024.5 1556.2,991.1 1559.5,1013.1 1561.9,1011.5 1566.8,1035.4 1569.8,978.7 1570.5,985.4 1571.6,995.2 1572.8,1006.2 1574.2,1016.4 1575.5,1024 1576.9,1028.5 1578.3,1031.3 1579.9,1032.9 1581.4,1033.8 1583,1034.5 1584.6,1035 1586.2,1034.8 1587.8,1034.2 1589.5,1033.2 1591,1032 1592.5,1031 1593.8,1030.1 1595.2,1028.8 1596.6,1026.3 1598,1022 1599.5,1015.5 1601,1007.2 1602.6,997.8 1604.2,988 1605.7,978.7 1607.2,969.6 1608.7,960.2 1610.2,950.8 1611.7,941.8 1613.2,933.4 1614.7,925.8 1616.1,918.8 1617.5,912.2 1619,905.8 1620.8,899.4 1622.8,893.3 1625,887.6 1627.3,881.9 1629.7,875.9 1632,869.2 1634.3,861.1 1636.8,852 1639.2,842.7 1641.4,834.2 1643.4,827.7 1645,823.2 1646.4,820.1 1647.6,818.1 1648.7,817 1649.8,816.4 1650.8,816.2 1651.7,816.5 1652.6,817.6 1653.6,820 1654.7,824 1656,829.9 1657.3,837.4 1658.7,846.2 1660.4,855.7 1662.3,865.5 1664.6,876.1 1667.4,887.7 1670.2,899.8 1673,911.4 1675.5,922 1677.7,931.8 1679.7,941.2 1681.5,949.8 1683.3,957.5 1685,963.6 1686.5,967.5 1687.9,969.4 1689.2,970.6 1690.7,972 1692.5,975 1694.8,980.2 1697.4,986.7 1700.1,993.7 1703,1000.1 1705.7,1005 1708.3,1007.7 1710.7,1008.8 1713.2,1009.3 1715.9,1010.2 1718.9,1012.6 1722.6,1017.1 1726.9,1023.1 1731.3,1029.4 1735.1,1035.1 1737.7,1039 1739.6,982 1741,1026.1 1745,1024.6 1747.3,1001.8 1751.5,1019.2 1755.1,1000.8 1758.5,1023.8 1761,1004.2 1764.4,1030.2 1767.2,1000.2 1770.1,1025.5 1773.6,1005.6 1775.5,1024.7 1778.9,995.9 1781.9,1025 1785.8,996.4 1787.8,1018.7 1789.9,1040.8 1789.9,1341.5" fill="#2e3650" clip-path="url(#cp7)"/><polygon points="1136.3,1341.5 1136.3,1096 1138.3,1134.3 1140.8,1164.5 1143,1139.4 1147.2,1168.7 1149.7,1141.3 1152.2,1161.3 1155.4,1137.5 1157.5,1162.9 1159.7,1133 1163.7,1165.9 1167.9,1131.9 1171.4,1161.8 1175.4,1137.6 1179.3,1167.2 1183.3,1134.5 1185.9,1164.5 1188.3,1167.1 1191.8,1161.8 1195.1,1139.4 1199.1,1169.4 1202.6,1131.6 1204.6,1163.4 1208.5,1141.7 1210.9,1140.3 1214.4,1155.2 1217.8,1141.7 1221.4,1154.8 1223.5,1140.3 1225.4,1167.1 1228.1,1134.6 1230.7,1154.7 1234.2,1130.8 1237.7,1136.2 1240.3,1155.3 1242.4,1161.4 1244.5,1129.8 1247.4,1154.1 1249.3,1141.4 1252.6,1160.2 1256.8,1156.5 1260,1133.6 1262.4,1158.8 1264.3,1136.2 1266.7,1154.6 1269,1134.7 1272.4,1155.8 1275.9,1158.6 1277.8,1135.7 1279.9,1163.2 1283.9,1133.1 1286.6,1140.6 1289.1,1163.4 1292,1135.4 1295.2,1153.4 1299.2,1139.5 1302.4,1157.3 1305.2,1138.8 1309,1160.3 1310.9,1131.7 1313.9,1156.5 1316.3,1133.3 1320,1128 1322.4,1158 1325.8,1128 1327.8,1156.1 1330.6,1135.7 1334.8,1131.2 1337.2,1159.9 1340.2,1137.9 1343.8,1138 1346.3,1162.5 1349,1126.4 1351.2,1161.7 1355.1,1136.4 1357.9,1159.5 1360.8,1126.1 1364.2,1159.8 1367.5,1132.8 1370.8,1137.6 1374.7,1157.7 1378.8,1128 1382.7,1135.7 1385,1158.3 1388.7,1134.9 1391.1,1155.6 1395.2,1132.2 1399.1,1156.3 1402.5,1131.5 1404.3,1148.6 1407.9,1125.5 1411.6,1158.2 1414.3,1129.1 1417.5,1159.1 1420.2,1129.1 1423.6,1152.6 1425.5,1156.8 1429.3,1125.8 1431.3,1154 1435.1,1123.6 1437.5,1151.4 1441.6,1132 1444.2,1153.7 1446.4,1127.4 1450.5,1127.2 1453,1131.4 1456.5,1149.1 1458.8,1122 1462.6,1148.3 1465.6,1152.6 1469.2,1120.6 1473.4,1147 1476,1126.2 1478.7,1125 1482.8,1147.8 1485.5,1119 1488.3,1149.3 1491,1126.7 1493.6,1161.9 1495.9,1126.8 1498.5,1144.9 1501.1,1124.9 1503.3,1152.3 1505.4,1122.8 1509,1148.9 1511.8,1147 1515.6,1121.2 1519.8,1153.1 1522.5,1116 1526.7,1141.6 1530.7,1126.9 1532.5,1141 1534.7,1112.6 1538.1,1126.8 1541,1146.2 1543,1124.6 1546,1147.5 1549,1125.1 1551.3,1139.2 1554.6,1115.4 1557.6,1149.8 1561.4,1118.1 1566.8,1164.3 1569.8,1088 1570.6,1095 1571.8,1105.3 1573.2,1116.8 1574.6,1127.4 1576,1135 1577.3,1139.2 1578.7,1141.4 1580.1,1142.3 1581.5,1142.5 1583,1142.8 1584.6,1143.2 1586.2,1143.1 1587.8,1142.7 1589.4,1142 1591,1141 1592.4,1140.8 1593.7,1141.2 1594.9,1140.9 1596.3,1138.3 1598,1132 1599.9,1120.4 1602.1,1104.6 1604.4,1086.7 1606.8,1069.1 1609.4,1054 1612.1,1042 1615,1031.5 1618,1021.7 1621.2,1011.9 1624.5,1001.3 1628.2,988.9 1632.4,975.4 1636.6,962 1640.4,950.1 1643.4,941 1645.4,934.9 1646.7,930.9 1647.7,928.8 1648.6,928.4 1649.8,929.6 1651.3,932.6 1652.8,937.4 1654.4,943.8 1656.3,951.4 1658.5,959.8 1661.2,969.4 1664.3,980.5 1667.5,992.5 1670.7,1004.7 1673.6,1016.4 1676,1028 1678,1039.8 1679.9,1051.4 1682.2,1062.6 1685,1073 1688.7,1082.8 1693,1092.3 1697.5,1101.1 1701.9,1108.6 1705.7,1114.5 1708.7,1117.9 1711.3,1119 1713.6,1119.3 1716,1119.8 1718.9,1122 1722.6,1126.5 1726.9,1132.5 1731.3,1138.9 1735.1,1144.6 1737.7,1148.5 1739.6,1092 1741,1138.3 1744.5,1115.5 1747.7,1136.9 1750.7,1111.8 1753.1,1138 1756.3,1117.7 1759.4,1138.3 1762.8,1116 1766.3,1143.2 1769,1111.4 1772.2,1144.8 1775.1,1114.7 1778.4,1142.6 1781.7,1112 1785.3,1144.4 1788.4,1110.6 1789.9,1158.8 1789.9,1341.5" fill="#364a66" clip-path="url(#cp7)"/><polygon points="1136.3,1341.5 1136.3,1135 1139.5,1136.4 1143.4,1160.7 1146.3,1166.9 1148.4,1141.6 1152,1170.6 1155.2,1141.6 1158.2,1140.9 1162.2,1162.5 1166.2,1133 1168.6,1168.6 1171.1,1143.4 1174.3,1164.7 1178.3,1139.8 1180.5,1167.7 1183.7,1166.2 1186.8,1142.4 1191,1148.1 1193.2,1161.9 1195.1,1170.4 1197.7,1139.9 1201.9,1165.9 1203.8,1147.1 1205.9,1159.5 1210,1139.9 1213.1,1165.9 1216.4,1139.6 1219.9,1161.8 1222.9,1169.9 1226.1,1149.4 1228.1,1166 1230.7,1142.2 1232.7,1166.6 1235.6,1143.5 1238.1,1163.5 1240.8,1135.9 1244.4,1162.9 1246.8,1148 1248.8,1163.1 1251.7,1141 1255,1169.2 1257.1,1144.5 1260.9,1161.9 1264.3,1141.8 1266.8,1168.4 1269.6,1145.9 1271.7,1150.3 1275.9,1145.8 1278.2,1142.6 1281.3,1163.3 1283.3,1144.3 1285.2,1169.9 1289.1,1169.9 1292.7,1148.9 1295.8,1164.9 1298.4,1148.1 1302.1,1164.3 1305.8,1149.1 1309.6,1136.2 1313.4,1161.4 1316.5,1146.6 1318.3,1161.5 1320.3,1140.9 1323.3,1164.3 1326.6,1145.1 1329.2,1162.4 1331.9,1150.5 1335.2,1169.4 1338.5,1146.9 1341.9,1165.7 1344.3,1145.9 1347.2,1165.9 1349.9,1170.9 1352.8,1150.4 1356.7,1169.9 1359.9,1150.7 1362,1175.6 1364,1142.6 1367.9,1163 1371.7,1142 1373.5,1169.9 1375.6,1144.2 1378.2,1167.8 1380.4,1149.5 1383.2,1165.8 1386,1151.4 1388.8,1144.4 1392.4,1169.2 1395.7,1143 1399.3,1171.9 1402.8,1150.6 1406,1165.7 1410.1,1149.5 1414,1168.6 1415.8,1147.7 1418.5,1165.9 1422.7,1147.8 1426.5,1171.3 1430,1144 1434.1,1167.7 1437.6,1146 1440,1151.1 1443.5,1172 1447.4,1149.9 1449.4,1164 1452,1147.2 1454.6,1167.7 1457.9,1143.4 1459.9,1166.1 1463.9,1137.5 1466.6,1145.4 1470,1170.3 1473.6,1143.6 1475.7,1168.7 1479.1,1147.8 1482.4,1165.5 1484.5,1144.1 1488,1170 1490.9,1150.7 1494.5,1171.7 1497.1,1151.3 1499,1148.8 1501.7,1167.4 1505.3,1150.5 1507.8,1165.1 1511.3,1152.4 1514.9,1172.7 1517,1150.2 1520.2,1166.4 1522.1,1146 1524.8,1148.7 1528.9,1171.6 1531.9,1170.8 1535.6,1147.7 1538.5,1166.6 1541.5,1148 1545.6,1174 1548.9,1154.4 1550.9,1170.4 1554.7,1147.7 1558,1145.3 1560.6,1173.4 1566.8,1186.6 1569.8,1135 1570.6,1141.7 1571.8,1151.5 1573.2,1162.5 1574.6,1172.6 1576,1180 1577.3,1184.1 1578.7,1186.3 1580.1,1187.3 1581.5,1187.6 1583,1188 1584.6,1188.4 1586.2,1188.3 1587.8,1187.9 1589.4,1187.1 1591,1186 1592.4,1185.6 1593.7,1185.8 1594.9,1185.2 1596.3,1182.4 1598,1176 1599.9,1164.7 1601.9,1149.6 1604.1,1132.3 1606.6,1115 1609.4,1099.4 1612.7,1085.8 1616.3,1073 1620.2,1060.6 1624.2,1048.2 1628.3,1035.3 1632.6,1020.3 1637.1,1003.5 1641.7,987.4 1646,974.5 1649.8,967.4 1652.7,966.3 1655,969.5 1657,976.6 1659.3,987.3 1662.3,1001.3 1666.2,1021.2 1670.7,1047.3 1675.6,1075.5 1680.4,1101.8 1685,1122 1689.1,1134.9 1692.9,1143.2 1696.7,1148.8 1700.9,1153.7 1705.7,1159.8 1711.9,1167.7 1719.2,1176 1726.7,1184 1733.2,1190.8 1737.7,1195.7 1739.6,1150 1741,1183.3 1744.6,1155.9 1746.7,1176.6 1748.7,1173.2 1750.6,1159.2 1753.7,1174.3 1757.2,1157.1 1761,1175 1765,1154.8 1767.5,1174.7 1771.5,1178.2 1774.4,1160.1 1776.5,1189.6 1779.9,1160.7 1784.1,1155.4 1786.6,1178.4 1789.9,1191 1789.9,1341.5" fill="#3d4d72" clip-path="url(#cp7)"/><polygon points="1136.3,1341.5 1136.3,1205 1138.5,1216.4 1142.2,1207.8 1144.7,1230.1 1148.7,1206.6 1150.9,1231.3 1154.8,1198.3 1158.2,1233.1 1160.2,1204.5 1162.7,1237.7 1166.6,1232.6 1169.4,1213.2 1171.3,1226.7 1174.4,1209.1 1176.7,1209.6 1179.1,1229.9 1182.3,1203.3 1184.6,1234.4 1187.2,1211.7 1190.7,1235.6 1194.8,1213.1 1198.5,1208.2 1202.2,1227.5 1204.3,1208.1 1206.2,1224.3 1208.8,1204.8 1211.7,1206 1213.9,1231.3 1216.8,1208.8 1219.9,1232.1 1222.9,1225.5 1225.7,1208.2 1228.7,1222.6 1231,1208.1 1232.9,1233 1235.7,1232.5 1239.2,1199.1 1243.1,1232 1246.5,1200.2 1249.6,1228.6 1253.6,1190.1 1257.7,1194.8 1259.8,1197.2 1262,1227.5 1266,1202.1 1267.9,1197.8 1271.5,1229.8 1273.8,1227.1 1277.5,1224.5 1279.4,1200.3 1282.6,1205.6 1285.7,1218.4 1287.7,1200.4 1290.2,1220.7 1292.3,1219.2 1295.3,1222.8 1297.3,1196 1301.1,1223.1 1305,1205 1307.6,1225 1309.4,1203.6 1312.9,1229.8 1316.7,1203.6 1320,1200 1324,1225.2 1327.9,1199.2 1330.1,1229.2 1332.2,1207.9 1334.4,1231.1 1337,1195.9 1341.1,1222.9 1343.6,1206.8 1347.4,1200.3 1349.6,1203.1 1353.6,1230.7 1357,1202.5 1360.8,1225.7 1364,1200.3 1366.4,1226.4 1370.3,1227.5 1372.8,1202 1375.9,1231.4 1380,1204.7 1384.1,1235.5 1386.7,1211.5 1390.7,1234.8 1393.1,1209.5 1396.8,1232.7 1399.2,1231 1401.1,1209.8 1405.3,1228.6 1408.8,1206.3 1412.4,1207.7 1415.5,1231.8 1418.4,1214 1420.9,1210.3 1423.4,1210.5 1427.3,1226.8 1429.5,1205.4 1432.7,1232.7 1436.4,1204 1440.5,1211.7 1443.7,1229 1446.2,1235.6 1448.1,1209.2 1451.5,1213.3 1454.1,1238.4 1458,1236.6 1461.1,1205.8 1464.6,1235.1 1467,1212.1 1471,1237.9 1474.8,1241.2 1478.1,1205.5 1480,1235.9 1483.9,1210.2 1486.6,1243.7 1490.8,1210.6 1494.2,1240.6 1496.4,1219.9 1498.9,1211.2 1502.7,1235.6 1505.8,1220.4 1509.7,1233.8 1513.9,1215.9 1518,1240.8 1520,1217.6 1522.2,1218.9 1526.4,1236.9 1530.3,1221.5 1533.9,1234.2 1536.2,1222.4 1540.3,1241.5 1542.5,1237 1546,1254.2 1549.5,1242.9 1551.7,1222.2 1554.8,1239.6 1558.5,1223.8 1560.8,1242.5 1566.8,1260.4 1569.8,1205 1570.6,1211.1 1571.8,1220 1573.2,1230 1574.6,1239.2 1576,1246 1577.3,1249.9 1578.7,1252.1 1580.1,1253.2 1581.5,1253.8 1583,1254.2 1584.6,1254.5 1586.2,1254.4 1587.8,1253.9 1589.4,1253 1591,1252 1592.3,1252.1 1593.5,1253.4 1594.7,1253.6 1596.1,1250.9 1598,1243 1600.6,1227.3 1603.7,1205.3 1607,1180.8 1610.3,1158.1 1613.2,1141 1615.5,1131.7 1617.3,1127.6 1619.2,1125.4 1621.4,1122.1 1624.5,1114.5 1628.9,1100 1634.4,1080.7 1640.2,1060.6 1645.6,1043.5 1649.8,1033.4 1652.5,1031.4 1654.2,1034.9 1655.4,1042.3 1656.6,1051.8 1658.5,1061.7 1661.2,1072.9 1664.3,1086.6 1667.5,1101.4 1670.7,1116.1 1673.6,1129.6 1676,1141.9 1678,1153.8 1679.9,1165.2 1682.2,1176 1685,1186.2 1688.4,1195.6 1692.1,1204.2 1696.2,1212.4 1700.7,1220.1 1705.7,1227.7 1711.9,1235.5 1719.2,1243.5 1726.7,1250.9 1733.2,1257.2 1737.7,1261.7 1739.6,1215 1741,1248.1 1743.3,1221.4 1745.2,1238.6 1748.6,1221.4 1751.8,1220.7 1755.1,1241.5 1757.5,1223.2 1760.7,1246.2 1763.5,1214.3 1765.8,1208.3 1769.5,1243.2 1773.7,1238.8 1776.4,1223.7 1778.4,1241.8 1780.8,1224.5 1784.1,1243.2 1786.7,1215.3 1789.9,1256.6 1789.9,1341.5" fill="#464c78" clip-path="url(#cp7)"/><polygon points="1136.3,1341.5 1136.3,1253 1140.4,1267.4 1143.3,1302.5 1145.4,1296 1148.5,1276.7 1152.5,1299.5 1154.7,1268.1 1158.6,1291.6 1162.4,1292.4 1165.9,1272.9 1170,1300 1172.2,1269.5 1175.4,1287.6 1178,1263.7 1180.9,1303.8 1182.8,1297.2 1186.5,1269.3 1188.4,1289.1 1192,1261.3 1194.7,1293.3 1198.3,1262.6 1202.3,1286.9 1206.3,1268.2 1208.9,1289.5 1211,1263.2 1213,1298.3 1215.3,1264.2 1218.1,1285.4 1221.1,1260.5 1225.2,1292.6 1228,1269.3 1230.9,1297.2 1233.8,1290.1 1236.3,1265.3 1240.5,1296 1243.1,1269.1 1247,1287.5 1250.4,1260.8 1253.9,1285.9 1257.4,1265.3 1260.6,1281.8 1264,1262.6 1267.7,1285.9 1271.5,1263.6 1275,1254.9 1278,1282.7 1281,1289.6 1283.2,1257 1286,1288.3 1289.5,1266.7 1292.9,1282.4 1294.8,1260.3 1296.9,1283.7 1298.8,1260.7 1302,1283 1304.8,1263.6 1308.6,1290.4 1310.6,1260.5 1314.7,1291.8 1318,1263.4 1321.2,1294.1 1323.8,1248.4 1327,1289.9 1330.9,1264.2 1333.4,1295.2 1337.4,1290.4 1340.4,1288.2 1343.4,1286.6 1346.7,1264.4 1350.5,1283.5 1354.5,1260.4 1356.7,1297.1 1359.6,1262.6 1361.7,1294.3 1364.3,1267.7 1367,1294.5 1369.4,1265.9 1372.5,1272.1 1375.7,1294.6 1379.7,1267.6 1381.9,1268.9 1385.8,1295.2 1389.4,1261.2 1392.5,1293 1395.8,1255.2 1399.5,1297.5 1403.1,1261.2 1405,1298.6 1409.1,1265.3 1413.1,1289.8 1415.2,1260.3 1418,1292.4 1421.5,1263.9 1424.1,1296.7 1426.8,1289.5 1430.1,1269.6 1433.4,1292.8 1437,1269.9 1439.7,1299.6 1443.1,1276.2 1445.2,1298.1 1448.1,1294.6 1451.7,1277.2 1455.1,1275.2 1458.5,1267.3 1461.1,1294.4 1463.8,1273.6 1467.1,1302.5 1470.2,1299.9 1472.9,1274.7 1474.8,1304.2 1476.6,1273.4 1479.4,1304.5 1481.6,1275 1483.8,1276.8 1486.3,1296.2 1490.3,1275.7 1493.7,1299.9 1497.1,1277.3 1499.3,1300.7 1501.3,1276.1 1503.8,1300.6 1507.4,1279.7 1511.4,1303.5 1513.2,1295.8 1515.1,1275.1 1517.8,1299.9 1520.8,1316.6 1522.7,1272.4 1525.5,1304.6 1529.6,1281.1 1532.7,1297.5 1535.8,1271.5 1538.1,1283.9 1541.3,1302 1545.3,1280.5 1547.6,1299 1551.2,1274 1553.2,1305.4 1556.4,1277.8 1558.3,1300.9 1560.4,1280 1566.8,1326.2 1569.8,1260 1570.6,1266.9 1571.8,1276.9 1573.2,1288.1 1574.6,1298.5 1576,1306 1577.3,1310.3 1578.7,1312.6 1580.1,1313.7 1581.5,1314.1 1583,1314.5 1584.6,1314.8 1586.2,1314.6 1587.8,1314 1589.4,1313.1 1591,1312 1592.3,1312.2 1593.5,1313.5 1594.7,1313.9 1596.1,1311.1 1598,1303 1600.5,1287.1 1603.5,1264.9 1606.7,1240 1610,1216.3 1613.2,1197.5 1616.1,1184.8 1618.9,1175.8 1621.8,1168.6 1624.9,1161.3 1628.3,1152.3 1632.4,1139.7 1637.1,1124.9 1641.8,1110.3 1646.2,1098.4 1649.8,1091.9 1652.3,1091.4 1653.9,1095.2 1655.2,1102.3 1656.6,1111.6 1658.5,1122 1661.1,1134.6 1664.2,1150 1667.4,1166.7 1670.6,1183.1 1673.6,1197.5 1676.3,1209.8 1678.7,1221 1681.2,1231.4 1683.8,1241.2 1686.8,1250.4 1690,1259 1693.3,1266.8 1696.9,1274 1701,1281 1705.7,1288.1 1711.8,1295.7 1719.1,1303.6 1726.6,1311.1 1733.1,1317.5 1737.7,1322 1739.6,1270 1741,1314.2 1745.1,1285.5 1747.3,1307 1750.7,1285 1753.4,1308.5 1755.7,1315.6 1759.5,1309.4 1763.7,1310.7 1767.3,1277.8 1770.9,1284.4 1774.5,1310.8 1777.7,1276.7 1781.2,1288 1783.6,1304 1787.3,1278 1789.2,1308.9 1789.9,1324.8 1789.9,1341.5" fill="#564d80" clip-path="url(#cp7)"/><line x1="1136.3" x2="1789.9" y1="806.3" y2="806.3" stroke="rgba(255,255,255,0.062)" stroke-width="2"/><line x1="1136.3" x2="1789.9" y1="886.3" y2="886.3" stroke="rgba(255,255,255,0.062)" stroke-width="2"/><line x1="1136.3" x2="1789.9" y1="966.4" y2="966.4" stroke="rgba(255,255,255,0.062)" stroke-width="2"/><line x1="1136.3" x2="1789.9" y1="1046.4" y2="1046.4" stroke="rgba(255,255,255,0.062)" stroke-width="2"/><line x1="1136.3" x2="1789.9" y1="1126.5" y2="1126.5" stroke="rgba(255,255,255,0.062)" stroke-width="2"/><line x1="1136.3" x2="1789.9" y1="1206.6" y2="1206.6" stroke="rgba(255,255,255,0.062)" stroke-width="2"/><line x1="1136.3" x2="1789.9" y1="1285.7" y2="1285.7" stroke="rgba(255,255,255,0.062)" stroke-width="2"/><line x1="1211" x2="1211" y1="798.5" y2="1341.5" stroke="rgba(255,255,255,0.062)" stroke-width="2"/><line x1="1375" x2="1375" y1="798.5" y2="1341.5" stroke="rgba(255,255,255,0.062)" stroke-width="2"/><line x1="1539" x2="1539" y1="798.5" y2="1341.5" stroke="rgba(255,255,255,0.062)" stroke-width="2"/><line x1="1701" x2="1701" y1="798.5" y2="1341.5" stroke="rgba(255,255,255,0.062)" stroke-width="2"/><line x1="1022.7" x2="1022.7" y1="790.7" y2="1376.3" stroke="#31323c" stroke-width="2.8"/><line x1="1136.3" x2="1136.3" y1="798.5" y2="1340" stroke="rgba(255,255,255,0.075)" stroke-width="2.6"/><line x1="1135" x2="1789.9" y1="1341.5" y2="1341.5" stroke="rgba(255,255,255,0.075)" stroke-width="3"/><polyline points="1136.3,967 1138.7,993.5 1142.4,1014.8 1145.2,983.6 1148.8,1013.3 1150.6,1010.9 1153.4,1013.2 1155.7,994.1 1158,1013.2 1159.9,989.3 1162.1,1022.5 1164.7,990.7 1167.6,989.4 1170.8,1021.2 1174,999 1176.8,1012.7 1180.2,994.9 1183.9,1016.9 1185.7,998.9 1189,994.7 1193.1,1019.8 1195.5,1016.8 1198.4,996.2 1200.2,990 1203.8,989.7 1206.6,1011.3 1208.9,993.3 1211.5,1017.1 1214.4,999.1 1217.6,1020.9 1221.4,996.3 1223.4,1013.4 1225.8,998.1 1227.7,1012.5 1230.2,990.9 1233.1,1010.9 1235.4,998.1 1237.7,1017.9 1239.5,997.6 1243,1018.7 1247.1,989.8 1250.5,1015.3 1253.8,998.7 1257.7,995.7 1261.8,1019.5 1263.6,981.6 1267.7,1017.4 1271.8,1019 1274.5,996.9 1276.7,1011.9 1279.7,995.5 1281.6,997 1285.3,995.3 1289.1,1021.8 1292.5,1016.4 1296.1,998.4 1298.4,990.3 1301.1,1014.7 1304.3,1022.1 1307.4,995.1 1311.3,1020.1 1314.6,990 1316.9,1011.6 1320.1,1021.7 1323.8,982.5 1325.8,1012 1328.2,987.5 1330.4,1013.5 1334.3,994.9 1336.9,996.4 1340.2,1013.8 1342.7,1017.8 1344.7,988.4 1346.7,996.8 1349.8,991.1 1352.9,1014.3 1355.4,987.6 1358.8,1021.9 1361.4,995.6 1363.9,995.4 1367.1,1017.4 1369.1,987.3 1372.4,1014.1 1376.3,997.5 1378.3,1022 1382.4,989.5 1385.5,1021.6 1387.6,1029 1391.6,989.8 1395.2,1018.9 1397.3,990.8 1399.3,1022.2 1402.4,989.2 1405,1017.6 1407.8,987 1409.9,1012.1 1412.7,994.6 1414.5,1016.9 1417.4,991.2 1420.3,1016.3 1423.5,988.5 1426.8,1014 1430.8,997.5 1433.3,991.1 1436.8,1019.4 1440.7,1022.1 1443.1,996.8 1445.1,1018.8 1448.1,997.4 1452.3,1020.3 1456.2,987.9 1460.1,1018.5 1464.1,987.7 1466.9,1012.6 1470.9,987.9 1473.7,1012 1477.3,999.4 1479.1,1018.1 1481.4,996 1484.6,1013.6 1488.4,987.7 1492.2,1019.8 1494.7,998.1 1498.3,1017.1 1502.4,997.8 1505,1016.6 1506.8,994.1 1509.5,1020 1512.9,994.9 1515.4,1017.8 1518.4,987.6 1521.2,1019.5 1523.4,992 1525.2,1015.3 1529.1,992.4 1532.7,993.5 1536,1018.2 1539.3,988.2 1543,1020.4 1545.4,990.9 1547.6,1020.6 1549.5,993.3 1552.1,1024.5 1556.2,991.1 1559.5,1013.1 1561.9,1011.5 1566.8,1035.4 1569.8,978.7 1570.5,985.4 1571.6,995.2 1572.8,1006.2 1574.2,1016.4 1575.5,1024 1576.9,1028.5 1578.3,1031.3 1579.9,1032.9 1581.4,1033.8 1583,1034.5 1584.6,1035 1586.2,1034.8 1587.8,1034.2 1589.5,1033.2 1591,1032 1592.5,1031 1593.8,1030.1 1595.2,1028.8 1596.6,1026.3 1598,1022 1599.5,1015.5 1601,1007.2 1602.6,997.8 1604.2,988 1605.7,978.7 1607.2,969.6 1608.7,960.2 1610.2,950.8 1611.7,941.8 1613.2,933.4 1614.7,925.8 1616.1,918.8 1617.5,912.2 1619,905.8 1620.8,899.4 1622.8,893.3 1625,887.6 1627.3,881.9 1629.7,875.9 1632,869.2 1634.3,861.1 1636.8,852 1639.2,842.7 1641.4,834.2 1643.4,827.7 1645,823.2 1646.4,820.1 1647.6,818.1 1648.7,817 1649.8,816.4 1650.8,816.2 1651.7,816.5 1652.6,817.6 1653.6,820 1654.7,824 1656,829.9 1657.3,837.4 1658.7,846.2 1660.4,855.7 1662.3,865.5 1664.6,876.1 1667.4,887.7 1670.2,899.8 1673,911.4 1675.5,922 1677.7,931.8 1679.7,941.2 1681.5,949.8 1683.3,957.5 1685,963.6 1686.5,967.5 1687.9,969.4 1689.2,970.6 1690.7,972 1692.5,975 1694.8,980.2 1697.4,986.7 1700.1,993.7 1703,1000.1 1705.7,1005 1708.3,1007.7 1710.7,1008.8 1713.2,1009.3 1715.9,1010.2 1718.9,1012.6 1722.6,1017.1 1726.9,1023.1 1731.3,1029.4 1735.1,1035.1 1737.7,1039 1739.6,982 1741,1026.1 1745,1024.6 1747.3,1001.8 1751.5,1019.2 1755.1,1000.8 1758.5,1023.8 1761,1004.2 1764.4,1030.2 1767.2,1000.2 1770.1,1025.5 1773.6,1005.6 1775.5,1024.7 1778.9,995.9 1781.9,1025 1785.8,996.4 1787.8,1018.7 1789.9,1040.8" fill="none" stroke="#4b90e8" stroke-width="2" stroke-linejoin="round" clip-path="url(#cp7)"/><polyline points="1136.3,1096 1138.3,1134.3 1140.8,1164.5 1143,1139.4 1147.2,1168.7 1149.7,1141.3 1152.2,1161.3 1155.4,1137.5 1157.5,1162.9 1159.7,1133 1163.7,1165.9 1167.9,1131.9 1171.4,1161.8 1175.4,1137.6 1179.3,1167.2 1183.3,1134.5 1185.9,1164.5 1188.3,1167.1 1191.8,1161.8 1195.1,1139.4 1199.1,1169.4 1202.6,1131.6 1204.6,1163.4 1208.5,1141.7 1210.9,1140.3 1214.4,1155.2 1217.8,1141.7 1221.4,1154.8 1223.5,1140.3 1225.4,1167.1 1228.1,1134.6 1230.7,1154.7 1234.2,1130.8 1237.7,1136.2 1240.3,1155.3 1242.4,1161.4 1244.5,1129.8 1247.4,1154.1 1249.3,1141.4 1252.6,1160.2 1256.8,1156.5 1260,1133.6 1262.4,1158.8 1264.3,1136.2 1266.7,1154.6 1269,1134.7 1272.4,1155.8 1275.9,1158.6 1277.8,1135.7 1279.9,1163.2 1283.9,1133.1 1286.6,1140.6 1289.1,1163.4 1292,1135.4 1295.2,1153.4 1299.2,1139.5 1302.4,1157.3 1305.2,1138.8 1309,1160.3 1310.9,1131.7 1313.9,1156.5 1316.3,1133.3 1320,1128 1322.4,1158 1325.8,1128 1327.8,1156.1 1330.6,1135.7 1334.8,1131.2 1337.2,1159.9 1340.2,1137.9 1343.8,1138 1346.3,1162.5 1349,1126.4 1351.2,1161.7 1355.1,1136.4 1357.9,1159.5 1360.8,1126.1 1364.2,1159.8 1367.5,1132.8 1370.8,1137.6 1374.7,1157.7 1378.8,1128 1382.7,1135.7 1385,1158.3 1388.7,1134.9 1391.1,1155.6 1395.2,1132.2 1399.1,1156.3 1402.5,1131.5 1404.3,1148.6 1407.9,1125.5 1411.6,1158.2 1414.3,1129.1 1417.5,1159.1 1420.2,1129.1 1423.6,1152.6 1425.5,1156.8 1429.3,1125.8 1431.3,1154 1435.1,1123.6 1437.5,1151.4 1441.6,1132 1444.2,1153.7 1446.4,1127.4 1450.5,1127.2 1453,1131.4 1456.5,1149.1 1458.8,1122 1462.6,1148.3 1465.6,1152.6 1469.2,1120.6 1473.4,1147 1476,1126.2 1478.7,1125 1482.8,1147.8 1485.5,1119 1488.3,1149.3 1491,1126.7 1493.6,1161.9 1495.9,1126.8 1498.5,1144.9 1501.1,1124.9 1503.3,1152.3 1505.4,1122.8 1509,1148.9 1511.8,1147 1515.6,1121.2 1519.8,1153.1 1522.5,1116 1526.7,1141.6 1530.7,1126.9 1532.5,1141 1534.7,1112.6 1538.1,1126.8 1541,1146.2 1543,1124.6 1546,1147.5 1549,1125.1 1551.3,1139.2 1554.6,1115.4 1557.6,1149.8 1561.4,1118.1 1566.8,1164.3 1569.8,1088 1570.6,1095 1571.8,1105.3 1573.2,1116.8 1574.6,1127.4 1576,1135 1577.3,1139.2 1578.7,1141.4 1580.1,1142.3 1581.5,1142.5 1583,1142.8 1584.6,1143.2 1586.2,1143.1 1587.8,1142.7 1589.4,1142 1591,1141 1592.4,1140.8 1593.7,1141.2 1594.9,1140.9 1596.3,1138.3 1598,1132 1599.9,1120.4 1602.1,1104.6 1604.4,1086.7 1606.8,1069.1 1609.4,1054 1612.1,1042 1615,1031.5 1618,1021.7 1621.2,1011.9 1624.5,1001.3 1628.2,988.9 1632.4,975.4 1636.6,962 1640.4,950.1 1643.4,941 1645.4,934.9 1646.7,930.9 1647.7,928.8 1648.6,928.4 1649.8,929.6 1651.3,932.6 1652.8,937.4 1654.4,943.8 1656.3,951.4 1658.5,959.8 1661.2,969.4 1664.3,980.5 1667.5,992.5 1670.7,1004.7 1673.6,1016.4 1676,1028 1678,1039.8 1679.9,1051.4 1682.2,1062.6 1685,1073 1688.7,1082.8 1693,1092.3 1697.5,1101.1 1701.9,1108.6 1705.7,1114.5 1708.7,1117.9 1711.3,1119 1713.6,1119.3 1716,1119.8 1718.9,1122 1722.6,1126.5 1726.9,1132.5 1731.3,1138.9 1735.1,1144.6 1737.7,1148.5 1739.6,1092 1741,1138.3 1744.5,1115.5 1747.7,1136.9 1750.7,1111.8 1753.1,1138 1756.3,1117.7 1759.4,1138.3 1762.8,1116 1766.3,1143.2 1769,1111.4 1772.2,1144.8 1775.1,1114.7 1778.4,1142.6 1781.7,1112 1785.3,1144.4 1788.4,1110.6 1789.9,1158.8" fill="none" stroke="#5ec8f2" stroke-width="2" stroke-linejoin="round" clip-path="url(#cp7)"/><polyline points="1136.3,1135 1139.5,1136.4 1143.4,1160.7 1146.3,1166.9 1148.4,1141.6 1152,1170.6 1155.2,1141.6 1158.2,1140.9 1162.2,1162.5 1166.2,1133 1168.6,1168.6 1171.1,1143.4 1174.3,1164.7 1178.3,1139.8 1180.5,1167.7 1183.7,1166.2 1186.8,1142.4 1191,1148.1 1193.2,1161.9 1195.1,1170.4 1197.7,1139.9 1201.9,1165.9 1203.8,1147.1 1205.9,1159.5 1210,1139.9 1213.1,1165.9 1216.4,1139.6 1219.9,1161.8 1222.9,1169.9 1226.1,1149.4 1228.1,1166 1230.7,1142.2 1232.7,1166.6 1235.6,1143.5 1238.1,1163.5 1240.8,1135.9 1244.4,1162.9 1246.8,1148 1248.8,1163.1 1251.7,1141 1255,1169.2 1257.1,1144.5 1260.9,1161.9 1264.3,1141.8 1266.8,1168.4 1269.6,1145.9 1271.7,1150.3 1275.9,1145.8 1278.2,1142.6 1281.3,1163.3 1283.3,1144.3 1285.2,1169.9 1289.1,1169.9 1292.7,1148.9 1295.8,1164.9 1298.4,1148.1 1302.1,1164.3 1305.8,1149.1 1309.6,1136.2 1313.4,1161.4 1316.5,1146.6 1318.3,1161.5 1320.3,1140.9 1323.3,1164.3 1326.6,1145.1 1329.2,1162.4 1331.9,1150.5 1335.2,1169.4 1338.5,1146.9 1341.9,1165.7 1344.3,1145.9 1347.2,1165.9 1349.9,1170.9 1352.8,1150.4 1356.7,1169.9 1359.9,1150.7 1362,1175.6 1364,1142.6 1367.9,1163 1371.7,1142 1373.5,1169.9 1375.6,1144.2 1378.2,1167.8 1380.4,1149.5 1383.2,1165.8 1386,1151.4 1388.8,1144.4 1392.4,1169.2 1395.7,1143 1399.3,1171.9 1402.8,1150.6 1406,1165.7 1410.1,1149.5 1414,1168.6 1415.8,1147.7 1418.5,1165.9 1422.7,1147.8 1426.5,1171.3 1430,1144 1434.1,1167.7 1437.6,1146 1440,1151.1 1443.5,1172 1447.4,1149.9 1449.4,1164 1452,1147.2 1454.6,1167.7 1457.9,1143.4 1459.9,1166.1 1463.9,1137.5 1466.6,1145.4 1470,1170.3 1473.6,1143.6 1475.7,1168.7 1479.1,1147.8 1482.4,1165.5 1484.5,1144.1 1488,1170 1490.9,1150.7 1494.5,1171.7 1497.1,1151.3 1499,1148.8 1501.7,1167.4 1505.3,1150.5 1507.8,1165.1 1511.3,1152.4 1514.9,1172.7 1517,1150.2 1520.2,1166.4 1522.1,1146 1524.8,1148.7 1528.9,1171.6 1531.9,1170.8 1535.6,1147.7 1538.5,1166.6 1541.5,1148 1545.6,1174 1548.9,1154.4 1550.9,1170.4 1554.7,1147.7 1558,1145.3 1560.6,1173.4 1566.8,1186.6 1569.8,1135 1570.6,1141.7 1571.8,1151.5 1573.2,1162.5 1574.6,1172.6 1576,1180 1577.3,1184.1 1578.7,1186.3 1580.1,1187.3 1581.5,1187.6 1583,1188 1584.6,1188.4 1586.2,1188.3 1587.8,1187.9 1589.4,1187.1 1591,1186 1592.4,1185.6 1593.7,1185.8 1594.9,1185.2 1596.3,1182.4 1598,1176 1599.9,1164.7 1601.9,1149.6 1604.1,1132.3 1606.6,1115 1609.4,1099.4 1612.7,1085.8 1616.3,1073 1620.2,1060.6 1624.2,1048.2 1628.3,1035.3 1632.6,1020.3 1637.1,1003.5 1641.7,987.4 1646,974.5 1649.8,967.4 1652.7,966.3 1655,969.5 1657,976.6 1659.3,987.3 1662.3,1001.3 1666.2,1021.2 1670.7,1047.3 1675.6,1075.5 1680.4,1101.8 1685,1122 1689.1,1134.9 1692.9,1143.2 1696.7,1148.8 1700.9,1153.7 1705.7,1159.8 1711.9,1167.7 1719.2,1176 1726.7,1184 1733.2,1190.8 1737.7,1195.7 1739.6,1150 1741,1183.3 1744.6,1155.9 1746.7,1176.6 1748.7,1173.2 1750.6,1159.2 1753.7,1174.3 1757.2,1157.1 1761,1175 1765,1154.8 1767.5,1174.7 1771.5,1178.2 1774.4,1160.1 1776.5,1189.6 1779.9,1160.7 1784.1,1155.4 1786.6,1178.4 1789.9,1191" fill="none" stroke="#8f55d8" stroke-width="2" stroke-linejoin="round" clip-path="url(#cp7)"/><polyline points="1136.3,1205 1138.5,1216.4 1142.2,1207.8 1144.7,1230.1 1148.7,1206.6 1150.9,1231.3 1154.8,1198.3 1158.2,1233.1 1160.2,1204.5 1162.7,1237.7 1166.6,1232.6 1169.4,1213.2 1171.3,1226.7 1174.4,1209.1 1176.7,1209.6 1179.1,1229.9 1182.3,1203.3 1184.6,1234.4 1187.2,1211.7 1190.7,1235.6 1194.8,1213.1 1198.5,1208.2 1202.2,1227.5 1204.3,1208.1 1206.2,1224.3 1208.8,1204.8 1211.7,1206 1213.9,1231.3 1216.8,1208.8 1219.9,1232.1 1222.9,1225.5 1225.7,1208.2 1228.7,1222.6 1231,1208.1 1232.9,1233 1235.7,1232.5 1239.2,1199.1 1243.1,1232 1246.5,1200.2 1249.6,1228.6 1253.6,1190.1 1257.7,1194.8 1259.8,1197.2 1262,1227.5 1266,1202.1 1267.9,1197.8 1271.5,1229.8 1273.8,1227.1 1277.5,1224.5 1279.4,1200.3 1282.6,1205.6 1285.7,1218.4 1287.7,1200.4 1290.2,1220.7 1292.3,1219.2 1295.3,1222.8 1297.3,1196 1301.1,1223.1 1305,1205 1307.6,1225 1309.4,1203.6 1312.9,1229.8 1316.7,1203.6 1320,1200 1324,1225.2 1327.9,1199.2 1330.1,1229.2 1332.2,1207.9 1334.4,1231.1 1337,1195.9 1341.1,1222.9 1343.6,1206.8 1347.4,1200.3 1349.6,1203.1 1353.6,1230.7 1357,1202.5 1360.8,1225.7 1364,1200.3 1366.4,1226.4 1370.3,1227.5 1372.8,1202 1375.9,1231.4 1380,1204.7 1384.1,1235.5 1386.7,1211.5 1390.7,1234.8 1393.1,1209.5 1396.8,1232.7 1399.2,1231 1401.1,1209.8 1405.3,1228.6 1408.8,1206.3 1412.4,1207.7 1415.5,1231.8 1418.4,1214 1420.9,1210.3 1423.4,1210.5 1427.3,1226.8 1429.5,1205.4 1432.7,1232.7 1436.4,1204 1440.5,1211.7 1443.7,1229 1446.2,1235.6 1448.1,1209.2 1451.5,1213.3 1454.1,1238.4 1458,1236.6 1461.1,1205.8 1464.6,1235.1 1467,1212.1 1471,1237.9 1474.8,1241.2 1478.1,1205.5 1480,1235.9 1483.9,1210.2 1486.6,1243.7 1490.8,1210.6 1494.2,1240.6 1496.4,1219.9 1498.9,1211.2 1502.7,1235.6 1505.8,1220.4 1509.7,1233.8 1513.9,1215.9 1518,1240.8 1520,1217.6 1522.2,1218.9 1526.4,1236.9 1530.3,1221.5 1533.9,1234.2 1536.2,1222.4 1540.3,1241.5 1542.5,1237 1546,1254.2 1549.5,1242.9 1551.7,1222.2 1554.8,1239.6 1558.5,1223.8 1560.8,1242.5 1566.8,1260.4 1569.8,1205 1570.6,1211.1 1571.8,1220 1573.2,1230 1574.6,1239.2 1576,1246 1577.3,1249.9 1578.7,1252.1 1580.1,1253.2 1581.5,1253.8 1583,1254.2 1584.6,1254.5 1586.2,1254.4 1587.8,1253.9 1589.4,1253 1591,1252 1592.3,1252.1 1593.5,1253.4 1594.7,1253.6 1596.1,1250.9 1598,1243 1600.6,1227.3 1603.7,1205.3 1607,1180.8 1610.3,1158.1 1613.2,1141 1615.5,1131.7 1617.3,1127.6 1619.2,1125.4 1621.4,1122.1 1624.5,1114.5 1628.9,1100 1634.4,1080.7 1640.2,1060.6 1645.6,1043.5 1649.8,1033.4 1652.5,1031.4 1654.2,1034.9 1655.4,1042.3 1656.6,1051.8 1658.5,1061.7 1661.2,1072.9 1664.3,1086.6 1667.5,1101.4 1670.7,1116.1 1673.6,1129.6 1676,1141.9 1678,1153.8 1679.9,1165.2 1682.2,1176 1685,1186.2 1688.4,1195.6 1692.1,1204.2 1696.2,1212.4 1700.7,1220.1 1705.7,1227.7 1711.9,1235.5 1719.2,1243.5 1726.7,1250.9 1733.2,1257.2 1737.7,1261.7 1739.6,1215 1741,1248.1 1743.3,1221.4 1745.2,1238.6 1748.6,1221.4 1751.8,1220.7 1755.1,1241.5 1757.5,1223.2 1760.7,1246.2 1763.5,1214.3 1765.8,1208.3 1769.5,1243.2 1773.7,1238.8 1776.4,1223.7 1778.4,1241.8 1780.8,1224.5 1784.1,1243.2 1786.7,1215.3 1789.9,1256.6" fill="none" stroke="#d3308f" stroke-width="2" stroke-linejoin="round" clip-path="url(#cp7)"/><polyline points="1136.3,1253 1140.4,1267.4 1143.3,1302.5 1145.4,1296 1148.5,1276.7 1152.5,1299.5 1154.7,1268.1 1158.6,1291.6 1162.4,1292.4 1165.9,1272.9 1170,1300 1172.2,1269.5 1175.4,1287.6 1178,1263.7 1180.9,1303.8 1182.8,1297.2 1186.5,1269.3 1188.4,1289.1 1192,1261.3 1194.7,1293.3 1198.3,1262.6 1202.3,1286.9 1206.3,1268.2 1208.9,1289.5 1211,1263.2 1213,1298.3 1215.3,1264.2 1218.1,1285.4 1221.1,1260.5 1225.2,1292.6 1228,1269.3 1230.9,1297.2 1233.8,1290.1 1236.3,1265.3 1240.5,1296 1243.1,1269.1 1247,1287.5 1250.4,1260.8 1253.9,1285.9 1257.4,1265.3 1260.6,1281.8 1264,1262.6 1267.7,1285.9 1271.5,1263.6 1275,1254.9 1278,1282.7 1281,1289.6 1283.2,1257 1286,1288.3 1289.5,1266.7 1292.9,1282.4 1294.8,1260.3 1296.9,1283.7 1298.8,1260.7 1302,1283 1304.8,1263.6 1308.6,1290.4 1310.6,1260.5 1314.7,1291.8 1318,1263.4 1321.2,1294.1 1323.8,1248.4 1327,1289.9 1330.9,1264.2 1333.4,1295.2 1337.4,1290.4 1340.4,1288.2 1343.4,1286.6 1346.7,1264.4 1350.5,1283.5 1354.5,1260.4 1356.7,1297.1 1359.6,1262.6 1361.7,1294.3 1364.3,1267.7 1367,1294.5 1369.4,1265.9 1372.5,1272.1 1375.7,1294.6 1379.7,1267.6 1381.9,1268.9 1385.8,1295.2 1389.4,1261.2 1392.5,1293 1395.8,1255.2 1399.5,1297.5 1403.1,1261.2 1405,1298.6 1409.1,1265.3 1413.1,1289.8 1415.2,1260.3 1418,1292.4 1421.5,1263.9 1424.1,1296.7 1426.8,1289.5 1430.1,1269.6 1433.4,1292.8 1437,1269.9 1439.7,1299.6 1443.1,1276.2 1445.2,1298.1 1448.1,1294.6 1451.7,1277.2 1455.1,1275.2 1458.5,1267.3 1461.1,1294.4 1463.8,1273.6 1467.1,1302.5 1470.2,1299.9 1472.9,1274.7 1474.8,1304.2 1476.6,1273.4 1479.4,1304.5 1481.6,1275 1483.8,1276.8 1486.3,1296.2 1490.3,1275.7 1493.7,1299.9 1497.1,1277.3 1499.3,1300.7 1501.3,1276.1 1503.8,1300.6 1507.4,1279.7 1511.4,1303.5 1513.2,1295.8 1515.1,1275.1 1517.8,1299.9 1520.8,1316.6 1522.7,1272.4 1525.5,1304.6 1529.6,1281.1 1532.7,1297.5 1535.8,1271.5 1538.1,1283.9 1541.3,1302 1545.3,1280.5 1547.6,1299 1551.2,1274 1553.2,1305.4 1556.4,1277.8 1558.3,1300.9 1560.4,1280 1566.8,1326.2 1569.8,1260 1570.6,1266.9 1571.8,1276.9 1573.2,1288.1 1574.6,1298.5 1576,1306 1577.3,1310.3 1578.7,1312.6 1580.1,1313.7 1581.5,1314.1 1583,1314.5 1584.6,1314.8 1586.2,1314.6 1587.8,1314 1589.4,1313.1 1591,1312 1592.3,1312.2 1593.5,1313.5 1594.7,1313.9 1596.1,1311.1 1598,1303 1600.5,1287.1 1603.5,1264.9 1606.7,1240 1610,1216.3 1613.2,1197.5 1616.1,1184.8 1618.9,1175.8 1621.8,1168.6 1624.9,1161.3 1628.3,1152.3 1632.4,1139.7 1637.1,1124.9 1641.8,1110.3 1646.2,1098.4 1649.8,1091.9 1652.3,1091.4 1653.9,1095.2 1655.2,1102.3 1656.6,1111.6 1658.5,1122 1661.1,1134.6 1664.2,1150 1667.4,1166.7 1670.6,1183.1 1673.6,1197.5 1676.3,1209.8 1678.7,1221 1681.2,1231.4 1683.8,1241.2 1686.8,1250.4 1690,1259 1693.3,1266.8 1696.9,1274 1701,1281 1705.7,1288.1 1711.8,1295.7 1719.1,1303.6 1726.6,1311.1 1733.1,1317.5 1737.7,1322 1739.6,1270 1741,1314.2 1745.1,1285.5 1747.3,1307 1750.7,1285 1753.4,1308.5 1755.7,1315.6 1759.5,1309.4 1763.7,1310.7 1767.3,1277.8 1770.9,1284.4 1774.5,1310.8 1777.7,1276.7 1781.2,1288 1783.6,1304 1787.3,1278 1789.2,1308.9 1789.9,1324.8" fill="none" stroke="#f04a5c" stroke-width="2" stroke-linejoin="round" clip-path="url(#cp7)"/><text x="1123" y="819.2" text-anchor="end" class="tk">31 °C</text><text x="1123" y="893.5" text-anchor="end" class="tk">30 °C</text><text x="1123" y="973.6" text-anchor="end" class="tk">29 °C</text><text x="1123" y="1053.6" text-anchor="end" class="tk">28 °C</text><text x="1123" y="1133.7" text-anchor="end" class="tk">27 °C</text><text x="1123" y="1213.8" text-anchor="end" class="tk">26 °C</text><text x="1123" y="1292.9" text-anchor="end" class="tk">25 °C</text><text x="1210" y="1368.3" text-anchor="middle" class="tk">09 Jan</text><text x="1374" y="1368.3" text-anchor="middle" class="tk">06:00</text><text x="1538" y="1368.3" text-anchor="middle" class="tk">12:00</text><text x="1700" y="1368.3" text-anchor="middle" class="tk">18:00</text><text x="1012" y="1081.2" transform="rotate(-90 1012 1081.2)" text-anchor="middle" class="al" textLength="127.5" lengthAdjust="spacingAndGlyphs">Temperature</text><text x="1001.5" y="757.3" class="ti" textLength="188" lengthAdjust="spacingAndGlyphs">WREB On-Board</text></svg></div>
<div id="hl"></div>
<div id="hdr"><div class="btn" style="left:110px;width:60px"></div><div class="btn" style="left:1509px;width:197px"></div><div style="position:absolute;left:1513px;top:28px;width:86px;height:52px;background:#1d1d23;border-radius:4px"></div><div class="btn" style="left:1714px;width:60px;background:#51a8ee"></div><div class="btn" style="left:1782px;width:196px"></div><div class="btn" style="left:1986px;width:212px"></div><div class="btn" style="left:2206px;width:168px"></div><div class="btn" style="left:2382px;width:240px"></div><div class="btn" style="left:2630px;width:60px"></div><svg width="2724" height="114" style="position:absolute;left:0;top:0"><rect x="126.5" y="45.7" width="8.2" height="8.3" rx="2" fill="#c8cad2"/><rect x="136.1" y="45.7" width="17.7" height="8.3" rx="2" fill="#c8cad2"/><rect x="126.5" y="55.1" width="8.2" height="8.5" rx="2" fill="#c8cad2"/><rect x="136.1" y="55.1" width="8.1" height="8.5" rx="2" fill="#c8cad2"/><rect x="145.7" y="55.1" width="8.1" height="8.5" rx="2" fill="#c8cad2"/><text x="197" y="68.8" class="ht" textLength="763" lengthAdjust="spacingAndGlyphs">AuxTel (LATISS) Temperatures and Pressures</text><g fill="#c4c6ce"><path d="M1397.2,43 A13.9,5.1 0 0 1 1425,43 L1425,50.2 A13.9,3.2 0 0 1 1397.2,50.2 Z"/><path d="M1397.2,51.9 A13.9,3.2 0 0 0 1425,51.9 L1425,58.6 A13.9,3.2 0 0 1 1397.2,58.6 Z"/><path d="M1397.2,60.3 A13.9,3.2 0 0 0 1425,60.3 L1425,66.4 A13.9,3.7 0 0 1 1397.2,66.4 Z"/></g><ellipse cx="1411.1" cy="42.8" rx="10.6" ry="2.7" fill="#0f0f16"/><circle cx="1476" cy="53" r="17" fill="#c4c6ce"/><text x="1476" y="63" text-anchor="middle" style="font-size:26.5px;font-weight:700;fill:#0f0f16;stroke:#0f0f16;stroke-width:0.9">?</text><text x="1529.5" y="63" class="bt" style="fill:#9ea1ad" textLength="52.5" lengthAdjust="spacingAndGlyphs">UTC</text><text x="1621" y="63" class="bt" style="fill:#ffffff" textLength="63.5" lengthAdjust="spacingAndGlyphs">Local</text><g fill="#f2f9fd"><rect x="1728" y="39" width="14" height="14" rx="1"/><rect x="1728" y="57" width="14" height="14" rx="1"/><rect x="1746" y="57" width="14" height="14" rx="1"/><rect x="1746" y="44.9" width="14" height="2.2"/><rect x="1751.9" y="39" width="2.2" height="14"/></g><g transform="translate(1802,39.3)"><path d="M15,0 L30,8 L30,23.5 L15,31.5 L0,23.5 L0,8 Z" fill="#c6c9d2"/><path d="M15,3 L26.5,8.5 L15,14.2 L3.5,8.5 Z" fill="#383846"/><path d="M2.8,11.4 L13.5,17 L13.5,27.4 L2.8,21.9 Z" fill="#383846"/></g><text x="1847" y="63" class="bt" textLength="110" lengthAdjust="spacingAndGlyphs">Variables</text><circle cx="2012.9" cy="46.8" r="6.1" fill="#c6c9d2"/><path d="M2010.8,51 L2015.2,51 L2015.2,67 L2013,70.5 L2010.8,67 Z" fill="#c6c9d2"/><text x="2032.8" y="63" class="bt" textLength="143.5" lengthAdjust="spacingAndGlyphs">Annotations</text><g fill="none" stroke="#c6c9d2" stroke-width="3.6" stroke-linecap="round"><path d="M2230,51.5 A11.5,11.5 0 0 1 2250,45"/><path d="M2252.2,55.5 A11.5,11.5 0 0 1 2232,62"/></g><path d="M2254.3,40.8 L2254.3,50.2 L2244.8,50.2 Z" fill="#c6c9d2"/><path d="M2227.9,66.3 L2227.9,56.9 L2237.4,56.9 Z" fill="#c6c9d2"/><text x="2267.6" y="63" class="bt" textLength="43.5" lengthAdjust="spacingAndGlyphs">10s</text><path d="M2332.6,49.9 L2348.6,49.9 L2340.6,58.4 Z" fill="#c6c9d2" stroke="#c6c9d2" stroke-width="2" stroke-linejoin="round"/><circle cx="2414.5" cy="54.5" r="12.7" fill="#c6c9d2"/><path d="M2414.5,44.5 L2414.5,55 L2423,55" fill="none" stroke="#383846" stroke-width="2.8"/><text x="2440.5" y="63" class="bt" textLength="105" lengthAdjust="spacingAndGlyphs">Past 24h</text><path d="M2585.4,49.1 L2601.6,49.1 L2593.5,58.1 Z" fill="#c6c9d2" stroke="#c6c9d2" stroke-width="2" stroke-linejoin="round"/><rect x="2648.4" y="47" width="23.5" height="15.8" fill="#c6c9d2"/><g fill="none" stroke="#c6c9d2" stroke-width="1.8"><path d="M2644.7,49.5 L2644.7,43.9 L2650.5,43.9"/><path d="M2669.5,43.9 L2675.3,43.9 L2675.3,49.5"/><path d="M2644.7,60.3 L2644.7,65.9 L2650.5,65.9"/><path d="M2669.5,65.9 L2675.3,65.9 L2675.3,60.3"/></g></svg></div>
</body></html>
